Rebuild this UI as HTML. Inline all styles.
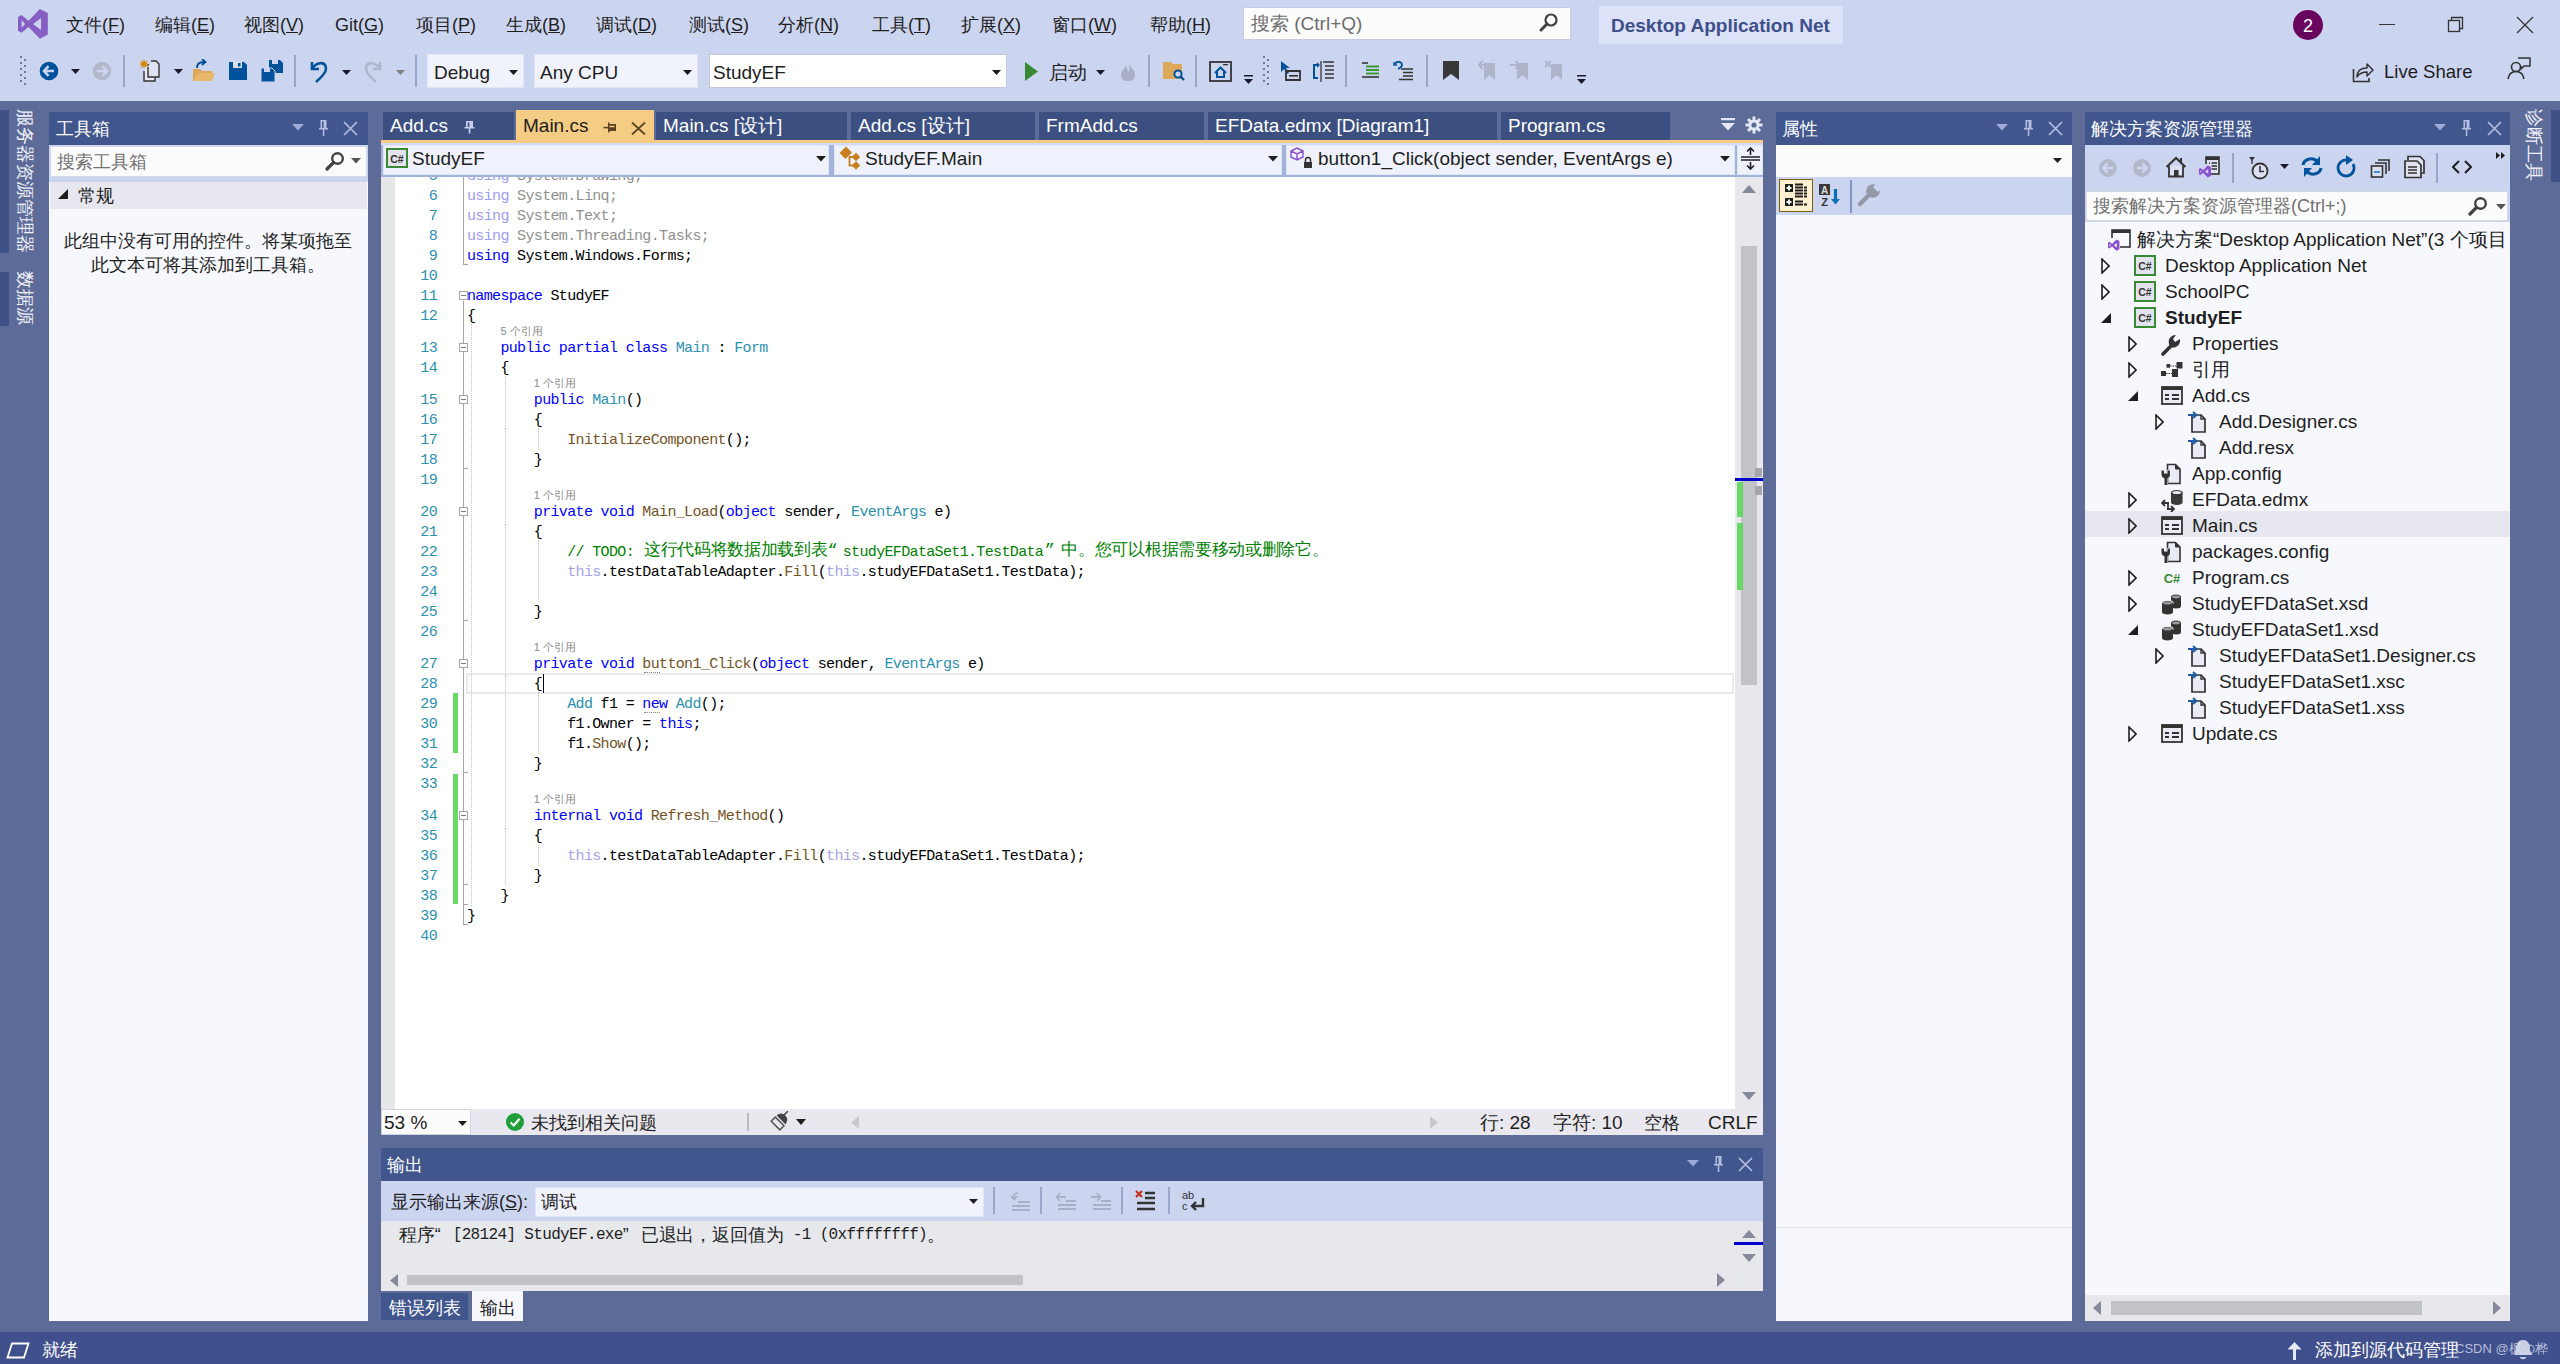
<!DOCTYPE html><html><head><meta charset="utf-8"><style>
html,body{margin:0;padding:0;width:2560px;height:1364px;overflow:hidden;background:#5D6B99;}
body{position:relative;font-family:"Liberation Sans", sans-serif;}
.t{position:absolute;white-space:pre;}
.m{font-family:"Liberation Mono", monospace;}
</style></head><body>
<div style="position:absolute;left:0px;top:0px;width:2560px;height:101px;background:#CCD5F0;"></div>
<svg style="position:absolute;left:12px;top:4px;" width="44" height="40" viewBox="0 0 44 40"><path d="M27.9 5 L35.8 9 L35.8 30.5 L27.9 34.7 L16.5 23 L9.5 28.7 L6 26.8 L6 13 L9.5 11 L16.5 16.8 Z M29 14 L21 20 L29 26 Z M9.7 16 L9.7 24 L13 20 Z" fill="#865FC5" fill-rule="evenodd"/></svg>
<div class="t" style="left:66px;top:11.5px;height:26px;line-height:26px;font-size:18px;color:#1e1e1e;">文件(<u>F</u>)</div>
<div class="t" style="left:155px;top:11.5px;height:26px;line-height:26px;font-size:18px;color:#1e1e1e;">编辑(<u>E</u>)</div>
<div class="t" style="left:244px;top:11.5px;height:26px;line-height:26px;font-size:18px;color:#1e1e1e;">视图(<u>V</u>)</div>
<div class="t" style="left:335px;top:11.5px;height:26px;line-height:26px;font-size:18px;color:#1e1e1e;">Git(<u>G</u>)</div>
<div class="t" style="left:416px;top:11.5px;height:26px;line-height:26px;font-size:18px;color:#1e1e1e;">项目(<u>P</u>)</div>
<div class="t" style="left:506px;top:11.5px;height:26px;line-height:26px;font-size:18px;color:#1e1e1e;">生成(<u>B</u>)</div>
<div class="t" style="left:596px;top:11.5px;height:26px;line-height:26px;font-size:18px;color:#1e1e1e;">调试(<u>D</u>)</div>
<div class="t" style="left:689px;top:11.5px;height:26px;line-height:26px;font-size:18px;color:#1e1e1e;">测试(<u>S</u>)</div>
<div class="t" style="left:778px;top:11.5px;height:26px;line-height:26px;font-size:18px;color:#1e1e1e;">分析(<u>N</u>)</div>
<div class="t" style="left:872px;top:11.5px;height:26px;line-height:26px;font-size:18px;color:#1e1e1e;">工具(<u>T</u>)</div>
<div class="t" style="left:961px;top:11.5px;height:26px;line-height:26px;font-size:18px;color:#1e1e1e;">扩展(<u>X</u>)</div>
<div class="t" style="left:1052px;top:11.5px;height:26px;line-height:26px;font-size:18px;color:#1e1e1e;">窗口(<u>W</u>)</div>
<div class="t" style="left:1150px;top:11.5px;height:26px;line-height:26px;font-size:18px;color:#1e1e1e;">帮助(<u>H</u>)</div>
<div style="position:absolute;left:1243px;top:7px;width:328px;height:33px;background:#FCFCFC;box-sizing:border-box;border:1px solid #C5CBE0;"></div>
<div class="t" style="left:1251px;top:9.5px;height:27px;line-height:27px;font-size:19px;color:#6d6d6d;">搜索 (Ctrl+Q)</div>
<svg style="position:absolute;left:1538px;top:12px;" width="22" height="22" viewBox="0 0 22 22"><circle cx="13" cy="8" r="5.5" fill="none" stroke="#424242" stroke-width="2.2"/><path d="M9 12 L3 18" stroke="#424242" stroke-width="3" stroke-linecap="round"/></svg>
<div style="position:absolute;left:1599px;top:6px;width:244px;height:38px;background:#DCE2F7;"></div>
<div class="t" style="left:1611px;top:11.5px;height:27px;line-height:27px;font-size:19px;color:#3E4F8A;font-weight:bold;">Desktop Application Net</div>
<svg style="position:absolute;left:2293px;top:10px;" width="30" height="30" viewBox="0 0 30 30"><circle cx="15" cy="15" r="15" fill="#68065E"/><text x="15" y="21.5" text-anchor="middle" font-family="Liberation Sans" font-size="18" fill="#fff">2</text></svg>
<div style="position:absolute;left:2379px;top:24px;width:16px;height:1.2px;background:#333;"></div>
<svg style="position:absolute;left:2446px;top:15px;" width="20" height="20" viewBox="0 0 20 20"><rect x="2.5" y="5.5" width="11" height="11" fill="none" stroke="#333" stroke-width="1.3"/><path d="M5.5 5.5 V2.5 H16.5 V13.5 H13.5" fill="none" stroke="#333" stroke-width="1.3"/></svg>
<svg style="position:absolute;left:2515px;top:15px;" width="20" height="20" viewBox="0 0 20 20"><path d="M2 2 L18 18 M18 2 L2 18" stroke="#333" stroke-width="1.2"/></svg>
<svg style="position:absolute;left:19px;top:56px;" width="8" height="30" viewBox="0 0 8 30"><rect x="1" y="0" width="2" height="2" fill="#6F7A9E"/><rect x="5" y="3" width="2" height="2" fill="#6F7A9E"/><rect x="1" y="6" width="2" height="2" fill="#6F7A9E"/><rect x="5" y="9" width="2" height="2" fill="#6F7A9E"/><rect x="1" y="12" width="2" height="2" fill="#6F7A9E"/><rect x="5" y="15" width="2" height="2" fill="#6F7A9E"/><rect x="1" y="18" width="2" height="2" fill="#6F7A9E"/><rect x="5" y="21" width="2" height="2" fill="#6F7A9E"/><rect x="1" y="24" width="2" height="2" fill="#6F7A9E"/><rect x="5" y="27" width="2" height="2" fill="#6F7A9E"/></svg>
<svg style="position:absolute;left:39px;top:61px;" width="20" height="20" viewBox="0 0 20 20"><circle cx="10" cy="10" r="9.3" fill="#00529B"/><path d="M5 10 H15 M9.5 5.2 L5 10 L9.5 14.8" stroke="#CCD5F0" stroke-width="2.6" fill="none"/></svg>
<svg style="position:absolute;left:71px;top:69px;" width="9" height="5" viewBox="0 0 9 5"><path d="M0 0 H9 L4.5 5 Z" fill="#1a1a2e"/></svg>
<svg style="position:absolute;left:92px;top:61px;" width="20" height="20" viewBox="0 0 20 20"><circle cx="10" cy="10" r="9.3" fill="#B3B8CB"/><path d="M5 10 H15 M10.5 5.2 L15 10 L10.5 14.8" stroke="#CCD5F0" stroke-width="2.6" fill="none"/></svg>
<div style="position:absolute;left:123px;top:55px;width:2px;height:32px;background:#9AA6CE;"></div>
<svg style="position:absolute;left:139px;top:59px;" width="22" height="24" viewBox="0 0 22 24"><path d="M5 12 V22 H16 V9 L13 6 H8" fill="#E8E8F4" stroke="#333" stroke-width="1.4"/><path d="M9 8 V18 H20 V5 L17 2 H12" fill="#E0E1F0" stroke="#333" stroke-width="1.4"/><path d="M5 1 V9 M1 5 H9 M2 2 L8 8 M8 2 L2 8" stroke="#D48A00" stroke-width="1.3"/></svg>
<svg style="position:absolute;left:174px;top:69px;" width="9" height="5" viewBox="0 0 9 5"><path d="M0 0 H9 L4.5 5 Z" fill="#1a1a2e"/></svg>
<svg style="position:absolute;left:192px;top:59px;" width="24" height="24" viewBox="0 0 24 24"><path d="M1 10 H8 L10 12 H20 V22 H1 Z" fill="#DCA85A"/><path d="M2 22 L5 14 H23 L20 22 Z" fill="#E8B86A"/><path d="M5 9 C5 4 8 3 13 3 M10 0 L13.5 3 L10 6" stroke="#00529B" stroke-width="1.8" fill="none"/></svg>
<svg style="position:absolute;left:228px;top:61px;" width="20" height="20" viewBox="0 0 20 20"><path d="M1 1 H16 L19 4 V19 H1 Z" fill="#00529B"/><rect x="5" y="1" width="9" height="6" fill="#D9DDF0"/><rect x="10" y="2" width="2.5" height="3.5" fill="#00529B"/></svg>
<svg style="position:absolute;left:260px;top:59px;" width="24" height="24" viewBox="0 0 24 24"><path d="M9 1 H20 L23 4 V14 H9 Z" fill="#00529B"/><rect x="12" y="1" width="6" height="4" fill="#CCD5F0"/><path d="M1 9 H12 L15 12 V23 H1 Z" fill="#00529B" stroke="#CCD5F0" stroke-width="1"/><rect x="4" y="9" width="6" height="4" fill="#CCD5F0"/></svg>
<div style="position:absolute;left:294px;top:55px;width:2px;height:32px;background:#9AA6CE;"></div>
<svg style="position:absolute;left:309px;top:59px;" width="20" height="24" viewBox="0 0 20 24"><path d="M3 3 V10 H10" stroke="#00529B" stroke-width="2.6" fill="none"/><path d="M3.5 9.5 C7 3 16 2 17 9 C17.5 13 14 17 7 23" stroke="#00529B" stroke-width="2.6" fill="none"/></svg>
<svg style="position:absolute;left:342px;top:70px;" width="9" height="5" viewBox="0 0 9 5"><path d="M0 0 H9 L4.5 5 Z" fill="#1a1a2e"/></svg>
<svg style="position:absolute;left:363px;top:59px;" width="20" height="24" viewBox="0 0 20 24"><path d="M17 3 V10 H10" stroke="#B0B6CB" stroke-width="2.6" fill="none"/><path d="M16.5 9.5 C13 3 4 2 3 9 C2.5 13 6 17 13 23" stroke="#B0B6CB" stroke-width="2.6" fill="none"/></svg>
<svg style="position:absolute;left:396px;top:70px;" width="9" height="5" viewBox="0 0 9 5"><path d="M0 0 H9 L4.5 5 Z" fill="#7F7F85"/></svg>
<div style="position:absolute;left:415px;top:55px;width:2px;height:32px;background:#9AA6CE;"></div>
<div style="position:absolute;left:427px;top:54px;width:97px;height:34px;background:#F0F3FC;box-sizing:border-box;border:1px solid #E1E6F6;"></div>
<div class="t" style="left:434px;top:58.5px;height:27px;line-height:27px;font-size:19px;color:#1e1e1e;">Debug</div>
<svg style="position:absolute;left:509px;top:70px;" width="9" height="5" viewBox="0 0 9 5"><path d="M0 0 H9 L4.5 5 Z" fill="#1a1a1a"/></svg>
<div style="position:absolute;left:534px;top:54px;width:164px;height:34px;background:#F0F3FC;box-sizing:border-box;border:1px solid #E1E6F6;"></div>
<div class="t" style="left:540px;top:58.5px;height:27px;line-height:27px;font-size:19px;color:#1e1e1e;">Any CPU</div>
<svg style="position:absolute;left:683px;top:70px;" width="9" height="5" viewBox="0 0 9 5"><path d="M0 0 H9 L4.5 5 Z" fill="#1a1a1a"/></svg>
<div style="position:absolute;left:709px;top:54px;width:298px;height:34px;background:#FFFFFF;box-sizing:border-box;border:1px solid #C3C9DD;"></div>
<div class="t" style="left:713px;top:58.5px;height:27px;line-height:27px;font-size:19px;color:#1e1e1e;">StudyEF</div>
<svg style="position:absolute;left:992px;top:70px;" width="9" height="5" viewBox="0 0 9 5"><path d="M0 0 H9 L4.5 5 Z" fill="#1a1a1a"/></svg>
<svg style="position:absolute;left:1025px;top:62px;" width="14" height="19" viewBox="0 0 14 19"><path d="M0 0 L13 9.5 L0 19 Z" fill="#388A34"/></svg>
<div class="t" style="left:1049px;top:58.5px;height:27px;line-height:27px;font-size:19px;color:#1e1e1e;">启动</div>
<svg style="position:absolute;left:1096px;top:70px;" width="9" height="5" viewBox="0 0 9 5"><path d="M0 0 H9 L4.5 5 Z" fill="#1a1a2e"/></svg>
<svg style="position:absolute;left:1119px;top:62px;" width="18" height="19" viewBox="0 0 18 19"><path d="M9 1 C12 6 16 8 16 13 C16 17 13 19 9 19 C5 19 2 17 2 13 C2 9 6 7 7 3 C8 6 8 8 10 10 C11 7 10 4 9 1 Z" fill="#A9AFC6"/></svg>
<div style="position:absolute;left:1148px;top:55px;width:2px;height:32px;background:#9AA6CE;"></div>
<svg style="position:absolute;left:1162px;top:61px;" width="24" height="21" viewBox="0 0 24 21"><path d="M1 1 H9 L11 3 H20 V18 H1 Z" fill="#DCA85A"/><circle cx="16" cy="13" r="3.6" fill="#CCD5F0" stroke="#00529B" stroke-width="2"/><path d="M18.5 15.5 L22 19" stroke="#00529B" stroke-width="2.4"/></svg>
<div style="position:absolute;left:1195px;top:55px;width:2px;height:32px;background:#9AA6CE;"></div>
<svg style="position:absolute;left:1209px;top:61px;" width="24" height="21" viewBox="0 0 24 21"><rect x="1" y="1" width="21" height="19" fill="none" stroke="#333" stroke-width="1.8"/><path d="M6 12 L11.5 6.5 L17 12 M8 11 V16 H15 V11" stroke="#00529B" stroke-width="2" fill="none"/><rect x="14" y="3" width="5" height="1.3" fill="#333"/></svg>
<svg style="position:absolute;left:1244px;top:75px;" width="9" height="10" viewBox="0 0 9 10"><rect x="0" y="0" width="9" height="1.5" fill="#1a1a2e"/><path d="M0 4 H9 L4.5 9 Z" fill="#1a1a2e"/></svg>
<svg style="position:absolute;left:1262px;top:56px;" width="8" height="30" viewBox="0 0 8 30"><rect x="1" y="0" width="2" height="2" fill="#6F7A9E"/><rect x="5" y="3" width="2" height="2" fill="#6F7A9E"/><rect x="1" y="6" width="2" height="2" fill="#6F7A9E"/><rect x="5" y="9" width="2" height="2" fill="#6F7A9E"/><rect x="1" y="12" width="2" height="2" fill="#6F7A9E"/><rect x="5" y="15" width="2" height="2" fill="#6F7A9E"/><rect x="1" y="18" width="2" height="2" fill="#6F7A9E"/><rect x="5" y="21" width="2" height="2" fill="#6F7A9E"/><rect x="1" y="24" width="2" height="2" fill="#6F7A9E"/><rect x="5" y="27" width="2" height="2" fill="#6F7A9E"/></svg>
<svg style="position:absolute;left:1280px;top:60px;" width="22" height="22" viewBox="0 0 22 22"><path d="M1 1 L1 12 L4 9 L7 14 L9 13 L6 8 H10 Z" fill="#00529B"/><path d="M6 11 H20 V20 H6 Z" fill="none" stroke="#333" stroke-width="1.8"/><rect x="9" y="15" width="9" height="1.6" fill="#333"/></svg>
<svg style="position:absolute;left:1312px;top:59px;" width="24" height="24" viewBox="0 0 24 24"><path d="M6 6 H2 V19 H6" stroke="#00529B" stroke-width="2" fill="none"/><path d="M9 2 V23" stroke="#555" stroke-width="1.6"/><path d="M11 3 H22 M13 7 H22 M13 11 H22 M13 15 H22 M13 19 H22" stroke="#333" stroke-width="1.6"/><path d="M5 4 L7 6 L5 8" stroke="#00529B" stroke-width="1.4" fill="none"/></svg>
<div style="position:absolute;left:1345px;top:55px;width:2px;height:32px;background:#9AA6CE;"></div>
<svg style="position:absolute;left:1362px;top:62px;" width="18" height="16" viewBox="0 0 18 16"><path d="M0 1 H6" stroke="#333" stroke-width="1.6"/><path d="M4 4.5 H17 M4 8 H17 M4 11.5 H17" stroke="#3A9A3A" stroke-width="1.8"/><path d="M0 15 H17" stroke="#333" stroke-width="1.6"/></svg>
<svg style="position:absolute;left:1393px;top:61px;" width="21" height="20" viewBox="0 0 21 20"><path d="M2 3 C3 0 9 0 9 4 C9 6 7 7 5 8" stroke="#00529B" stroke-width="1.8" fill="none"/><path d="M1 1 V4 H4" stroke="#00529B" stroke-width="1.4" fill="none"/><path d="M8 8 H20 M10 11.5 H20 M10 15 H20 M6 18.5 H20" stroke="#333" stroke-width="1.7"/></svg>
<div style="position:absolute;left:1426px;top:55px;width:2px;height:32px;background:#9AA6CE;"></div>
<svg style="position:absolute;left:1442px;top:61px;" width="18" height="20" viewBox="0 0 18 20"><path d="M1 0 H17 V19 L9 13 L1 19 Z" fill="#383838"/></svg>
<svg style="position:absolute;left:1478px;top:60px;" width="19" height="21" viewBox="0 0 19 21"><path d="M6 3 H17 V20 L11.5 15 L6 20 Z" fill="#AEB4C9"/><path d="M1 5 H9 M4.5 1 L1 5 L4.5 9" stroke="#AEB4C9" stroke-width="2" fill="none"/></svg>
<svg style="position:absolute;left:1510px;top:60px;" width="20" height="21" viewBox="0 0 20 21"><path d="M7 3 H18 V20 L12.5 15 L7 20 Z" fill="#AEB4C9"/><path d="M0 5 H9 M5.5 1 L9 5 L5.5 9" stroke="#AEB4C9" stroke-width="2" fill="none"/></svg>
<svg style="position:absolute;left:1544px;top:60px;" width="20" height="21" viewBox="0 0 20 21"><path d="M7 4 H18 V20 L12.5 15 L7 20 Z" fill="#AEB4C9"/><path d="M1 1 L7 7 M7 1 L1 7" stroke="#AEB4C9" stroke-width="1.8"/></svg>
<svg style="position:absolute;left:1577px;top:75px;" width="9" height="10" viewBox="0 0 9 10"><rect x="0" y="0" width="9" height="1.5" fill="#1a1a2e"/><path d="M0 4 H9 L4.5 9 Z" fill="#1a1a2e"/></svg>
<svg style="position:absolute;left:2352px;top:61px;" width="22" height="22" viewBox="0 0 22 22"><path d="M1.5 8 V20.5 H17 V17" stroke="#333" stroke-width="1.6" fill="none"/><path d="M5 16 C5 10 9 7 15 7 V3 L21 9 L15 15 V11 C10 11 7 13 5 16 Z" stroke="#333" stroke-width="1.5" fill="none" stroke-linejoin="round"/></svg>
<div class="t" style="left:2384px;top:58.8px;height:26.5px;line-height:26.5px;font-size:18.5px;color:#1e1e1e;">Live Share</div>
<svg style="position:absolute;left:2507px;top:57px;" width="24" height="24" viewBox="0 0 24 24"><circle cx="9" cy="10" r="4.5" fill="none" stroke="#333" stroke-width="1.6"/><path d="M1 22 C2 16 5 14.5 9 14.5 C13 14.5 16 16 17 22" stroke="#333" stroke-width="1.6" fill="none"/><path d="M11 1 H23 V9 H17 L14 12 V9" stroke="#333" stroke-width="1.5" fill="none"/></svg>
<div style="position:absolute;left:0px;top:110px;width:9px;height:143px;background:#3F5288;"></div>
<div style="position:absolute;left:0px;top:272px;width:9px;height:54px;background:#3F5288;"></div>
<div class="t" style="left:37px;top:109px;width:150px;height:24px;line-height:24px;font-size:18px;color:#F0F2FA;transform-origin:0 0;transform:rotate(90deg);">服务器资源管理器</div>
<div class="t" style="left:37px;top:271px;width:60px;height:24px;line-height:24px;font-size:18px;color:#F0F2FA;transform-origin:0 0;transform:rotate(90deg);">数据源</div>
<div style="position:absolute;left:2551px;top:110px;width:9px;height:72px;background:#3F5288;"></div>
<div class="t" style="left:2546px;top:109px;width:80px;height:24px;line-height:24px;font-size:18px;color:#F0F2FA;transform-origin:0 0;transform:rotate(90deg);">诊断工具</div>
<div style="position:absolute;left:49px;top:112px;width:319px;height:33px;background:#40568D;"></div>
<div class="t" style="left:56px;top:115.5px;height:26px;line-height:26px;font-size:18px;color:#FFFFFF;">工具箱</div>
<svg style="position:absolute;left:292px;top:124px;" width="12" height="7" viewBox="0 0 12 7"><path d="M0 0 H12 L6 6.5 Z" fill="#9EA9D6"/></svg>
<svg style="position:absolute;left:318px;top:119px;" width="11" height="18" viewBox="0 0 11 18"><path d="M2.5 1 H8.5 V9 H10 V10.5 H1 V9 H2.5 Z M4 2.5 V9 H5.5 V2.5 Z" fill="#B3BEE2" fill-rule="evenodd"/><rect x="4.8" y="10" width="1.5" height="7" fill="#B3BEE2"/></svg>
<svg style="position:absolute;left:343px;top:121px;" width="15" height="15" viewBox="0 0 15 15"><path d="M1 1 L14 14 M14 1 L1 14" stroke="#B3BEE2" stroke-width="1.7"/></svg>
<div style="position:absolute;left:49px;top:145px;width:319px;height:37px;background:#CCD5F0;"></div>
<div style="position:absolute;left:50px;top:146px;width:317px;height:31px;background:#FCFCFC;box-sizing:border-box;border:1px solid #D5D9E6;"></div>
<div class="t" style="left:57px;top:148.5px;height:26px;line-height:26px;font-size:18px;color:#717171;">搜索工具箱</div>
<svg style="position:absolute;left:325px;top:151px;" width="20" height="20" viewBox="0 0 20 20"><circle cx="12.5" cy="7.5" r="5.3" fill="none" stroke="#424242" stroke-width="2.4"/><path d="M8.5 11.5 L2 18" stroke="#424242" stroke-width="3.2" stroke-linecap="round"/></svg>
<svg style="position:absolute;left:351px;top:158px;" width="10" height="6" viewBox="0 0 10 6"><path d="M0 0 H10 L5 5.5 Z" fill="#555"/></svg>
<div style="position:absolute;left:49px;top:182px;width:319px;height:1139px;background:#F7F8FD;"></div>
<div style="position:absolute;left:50px;top:182px;width:317px;height:27px;background:#E6E7EF;"></div>
<svg style="position:absolute;left:58px;top:189px;" width="11" height="11" viewBox="0 0 11 11"><path d="M10 0 V10 H0 Z" fill="#1e1e1e"/></svg>
<div class="t" style="left:78px;top:182.5px;height:26px;line-height:26px;font-size:18px;color:#1e1e1e;">常规</div>
<div class="t" style="left:64px;top:228.0px;height:26px;line-height:26px;font-size:18px;color:#1e1e1e;">此组中没有可用的控件。将某项拖至</div>
<div class="t" style="left:91px;top:252.0px;height:26px;line-height:26px;font-size:18px;color:#1e1e1e;">此文本可将其添加到工具箱。</div>
<div style="position:absolute;left:1776px;top:112px;width:296px;height:33px;background:#40568D;"></div>
<div class="t" style="left:1782px;top:115.5px;height:26px;line-height:26px;font-size:18px;color:#FFFFFF;">属性</div>
<svg style="position:absolute;left:1996px;top:124px;" width="12" height="7" viewBox="0 0 12 7"><path d="M0 0 H12 L6 6.5 Z" fill="#9EA9D6"/></svg>
<svg style="position:absolute;left:2023px;top:119px;" width="11" height="18" viewBox="0 0 11 18"><path d="M2.5 1 H8.5 V9 H10 V10.5 H1 V9 H2.5 Z M4 2.5 V9 H5.5 V2.5 Z" fill="#B3BEE2" fill-rule="evenodd"/><rect x="4.8" y="10" width="1.5" height="7" fill="#B3BEE2"/></svg>
<svg style="position:absolute;left:2048px;top:121px;" width="15" height="15" viewBox="0 0 15 15"><path d="M1 1 L14 14 M14 1 L1 14" stroke="#B3BEE2" stroke-width="1.7"/></svg>
<div style="position:absolute;left:1776px;top:145px;width:296px;height:32px;background:#FCFCFD;"></div>
<svg style="position:absolute;left:2053px;top:158px;" width="9" height="5" viewBox="0 0 9 5"><path d="M0 0 H9 L4.5 5 Z" fill="#1e1e1e"/></svg>
<div style="position:absolute;left:1776px;top:177px;width:296px;height:38px;background:#CCD5F0;"></div>
<div style="position:absolute;left:1779px;top:179px;width:34px;height:33px;background:#FFF0D2;box-sizing:border-box;border:1.5px solid #80600A;"></div>
<svg style="position:absolute;left:1784px;top:183px;" width="25" height="25" viewBox="0 0 25 25"><rect x="1" y="1" width="8" height="8" fill="#1e1e1e"/><path d="M2.5 5 H7.5 M5 2.5 V7.5" stroke="#F0F0F0" stroke-width="2"/><rect x="1" y="15" width="8" height="8" fill="#1e1e1e"/><path d="M2.5 19 H7.5 M5 16.5 V21.5" stroke="#F0F0F0" stroke-width="2"/><path d="M11 1.5 H19 M11 4.5 H19 M11 7.5 H19 M11 10.5 H19 M11 13.5 H19 M11 18.5 H19 M11 21.5 H19 M20 4.5 H23 M20 7.5 H23 M20 10.5 H23 M20 13.5 H23 M20 21.5 H23" stroke="#1e1e1e" stroke-width="1.8"/></svg>
<svg style="position:absolute;left:1818px;top:183px;" width="24" height="25" viewBox="0 0 24 25"><rect x="1" y="1" width="11" height="11" fill="#3a3a3a"/><text x="6.5" y="10.5" font-size="10" font-family="Liberation Sans" font-weight="bold" fill="#ddd" text-anchor="middle">A</text><text x="6.5" y="23" font-size="11" font-family="Liberation Sans" font-weight="bold" fill="#333" text-anchor="middle">Z</text><path d="M17.5 6 V18" stroke="#0E6FB8" stroke-width="3.2"/><path d="M13 16 H22 L17.5 21.5 Z" fill="#0E6FB8"/></svg>
<div style="position:absolute;left:1850px;top:180px;width:1.5px;height:33px;background:#8393C4;"></div>
<svg style="position:absolute;left:1857px;top:182px;" width="26" height="26" viewBox="0 0 26 26"><path d="M3 22 L13 12" stroke="#9499A6" stroke-width="4.5" stroke-linecap="round"/><circle cx="16" cy="9" r="6.8" fill="#9499A6"/><path d="M16 5 L20 1 L25 6 L21 10 Z" fill="#CCD5F0"/></svg>
<div style="position:absolute;left:1776px;top:215px;width:296px;height:1106px;background:#F7F8FD;"></div>
<div style="position:absolute;left:1776px;top:1227px;width:296px;height:1px;background:#E3E5EE;"></div>
<div style="position:absolute;left:2085px;top:112px;width:425px;height:33px;background:#40568D;"></div>
<div class="t" style="left:2091px;top:115.5px;height:26px;line-height:26px;font-size:18px;color:#FFFFFF;">解决方案资源管理器</div>
<svg style="position:absolute;left:2434px;top:124px;" width="12" height="7" viewBox="0 0 12 7"><path d="M0 0 H12 L6 6.5 Z" fill="#9EA9D6"/></svg>
<svg style="position:absolute;left:2461px;top:119px;" width="11" height="18" viewBox="0 0 11 18"><path d="M2.5 1 H8.5 V9 H10 V10.5 H1 V9 H2.5 Z M4 2.5 V9 H5.5 V2.5 Z" fill="#B3BEE2" fill-rule="evenodd"/><rect x="4.8" y="10" width="1.5" height="7" fill="#B3BEE2"/></svg>
<svg style="position:absolute;left:2487px;top:121px;" width="15" height="15" viewBox="0 0 15 15"><path d="M1 1 L14 14 M14 1 L1 14" stroke="#B3BEE2" stroke-width="1.7"/></svg>
<div style="position:absolute;left:2085px;top:145px;width:425px;height:45px;background:#CCD5F0;"></div>
<div style="position:absolute;left:2085px;top:190px;width:425px;height:32px;background:#CCD5F0;"></div>
<div style="position:absolute;left:2086px;top:191px;width:422px;height:30px;background:#FCFCFC;box-sizing:border-box;border:1px solid #D5D9E6;"></div>
<div class="t" style="left:2093px;top:192.5px;height:26px;line-height:26px;font-size:18px;color:#717171;">搜索解决方案资源管理器(Ctrl+;)</div>
<svg style="position:absolute;left:2468px;top:196px;" width="20" height="20" viewBox="0 0 20 20"><circle cx="12.5" cy="7.5" r="5.3" fill="none" stroke="#424242" stroke-width="2.4"/><path d="M8.5 11.5 L2 18" stroke="#424242" stroke-width="3.2" stroke-linecap="round"/></svg>
<svg style="position:absolute;left:2496px;top:204px;" width="10" height="6" viewBox="0 0 10 6"><path d="M0 0 H10 L5 5.5 Z" fill="#555"/></svg>
<div style="position:absolute;left:2085px;top:222px;width:425px;height:1099px;background:#F7F8FD;"></div>
<svg style="position:absolute;left:2098px;top:158px;" width="20" height="20" viewBox="0 0 20 20"><circle cx="10" cy="10" r="9" fill="#B3B8CB"/><path d="M5 10 H15 M9.5 5.5 L5 10 L9.5 14.5" stroke="#CCD5F0" stroke-width="2.4" fill="none"/></svg>
<svg style="position:absolute;left:2132px;top:158px;" width="20" height="20" viewBox="0 0 20 20"><circle cx="10" cy="10" r="9" fill="#B3B8CB"/><path d="M5 10 H15 M10.5 5.5 L15 10 L10.5 14.5" stroke="#CCD5F0" stroke-width="2.4" fill="none"/></svg>
<svg style="position:absolute;left:2165px;top:156px;" width="22" height="22" viewBox="0 0 22 22"><path d="M1.5 11 L11 2 L20.5 11" stroke="#333" stroke-width="2" fill="none"/><path d="M4 10 V20.5 H18 V10" fill="#DDE0F0" stroke="#333" stroke-width="1.8"/><rect x="9" y="14" width="4.5" height="6.5" fill="#333"/><rect x="15" y="2" width="2" height="5" fill="#333"/></svg>
<svg style="position:absolute;left:2198px;top:156px;" width="22" height="22" viewBox="0 0 22 22"><rect x="8" y="1" width="13" height="17" fill="#DDE0F0" stroke="#333" stroke-width="1.6"/><rect x="8" y="1" width="13" height="3" fill="#333"/><path d="M11 7 H12 M13.5 7 H19 M13.5 10 H19 M13.5 13 H19" stroke="#333" stroke-width="1.4"/><rect x="0" y="8" width="11" height="14" fill="#CCD5F0"/><path transform="translate(-1.40 7.50) scale(0.400)" d="M27.9 5 L35.8 9 L35.8 30.5 L27.9 34.7 L16.5 23 L9.5 28.7 L6 26.8 L6 13 L9.5 11 L16.5 16.8 Z M29 14 L21 20 L29 26 Z M9.7 16 L9.7 24 L13 20 Z" fill="#8A4FCF" fill-rule="evenodd"/></svg>
<div style="position:absolute;left:2232px;top:153px;width:2px;height:30px;background:#9AA6CE;"></div>
<svg style="position:absolute;left:2247px;top:156px;" width="24" height="24" viewBox="0 0 24 24"><path d="M2 1 H8 L5 5 Z" fill="#333"/><path d="M5 4 V8" stroke="#333" stroke-width="1.3"/><circle cx="13" cy="15" r="7.5" fill="#DDE0F0" stroke="#333" stroke-width="1.8"/><path d="M13 10 V15.5 H17" stroke="#333" stroke-width="1.6" fill="none"/></svg>
<svg style="position:absolute;left:2280px;top:164px;" width="9" height="5" viewBox="0 0 9 5"><path d="M0 0 H9 L4.5 5 Z" fill="#1a1a2e"/></svg>
<svg style="position:absolute;left:2300px;top:155px;" width="24" height="24" viewBox="0 0 24 24"><path d="M3 10 C4 4 12 2 17 6 L19 8" stroke="#00539C" stroke-width="3" fill="none"/><path d="M20 1 V10 H12 Z" fill="#00539C"/><path d="M21 13 C20 19 12 21 7 17 L5 15" stroke="#00539C" stroke-width="3" fill="none"/><path d="M4 22 V13 H12 Z" fill="#00539C"/></svg>
<svg style="position:absolute;left:2336px;top:155px;" width="22" height="24" viewBox="0 0 22 24"><path d="M17 9 A8 8 0 1 1 11 5" stroke="#00539C" stroke-width="2.8" fill="none"/><path d="M10 0 L17 5 L10 10 Z" fill="#00539C"/></svg>
<svg style="position:absolute;left:2370px;top:157px;" width="22" height="22" viewBox="0 0 22 22"><rect x="1.5" y="9" width="11" height="11" fill="#DDE0F0" stroke="#333" stroke-width="1.6"/><path d="M5 6 H16 V17 M8 3 H19 V14" stroke="#333" stroke-width="1.6" fill="none"/><path d="M4 15 H10" stroke="#1C7CD5" stroke-width="1.6"/></svg>
<svg style="position:absolute;left:2403px;top:155px;" width="24" height="24" viewBox="0 0 24 24"><path d="M5 5 V1.5 H17 L21 5.5 V18 H18" stroke="#333" stroke-width="1.7" fill="#E0E2EF"/><path d="M2 6 H14 L18 10 V22.5 H2 Z" fill="#E0E2EF" stroke="#333" stroke-width="1.7"/><path d="M5 12 H14 M5 15 H14 M5 18 H14" stroke="#333" stroke-width="1.4"/></svg>
<div style="position:absolute;left:2436px;top:153px;width:2px;height:30px;background:#9AA6CE;"></div>
<svg style="position:absolute;left:2452px;top:160px;" width="20" height="14" viewBox="0 0 20 14"><path d="M7 1 L1 7 L7 13 M13 1 L19 7 L13 13" stroke="#1e1e1e" stroke-width="2" fill="none"/></svg>
<svg style="position:absolute;left:2496px;top:152px;" width="10" height="8" viewBox="0 0 10 8"><path d="M0 0 L4 3.5 L0 7 Z M5 0 L9 3.5 L5 7 Z" fill="#1e1e1e"/></svg>
<div style="position:absolute;left:2085px;top:1295px;width:425px;height:26px;background:#E8E8EC;"></div>
<svg style="position:absolute;left:2093px;top:1301px;" width="8" height="14" viewBox="0 0 8 14"><path d="M8 0 V14 L0 7 Z" fill="#868999"/></svg>
<div style="position:absolute;left:2111px;top:1301px;width:311px;height:14px;background:#C2C3C9;"></div>
<svg style="position:absolute;left:2493px;top:1301px;" width="8" height="14" viewBox="0 0 8 14"><path d="M0 0 V14 L8 7 Z" fill="#868999"/></svg>
<div style="position:absolute;left:0px;top:1332px;width:2560px;height:32px;background:#40508D;"></div>
<svg style="position:absolute;left:6px;top:1342px;" width="24" height="17" viewBox="0 0 24 17"><path d="M6 1.5 H22.5 L18 15.5 H1.5 Z" fill="none" stroke="#fff" stroke-width="1.8"/></svg>
<div class="t" style="left:42px;top:1337.0px;height:26px;line-height:26px;font-size:18px;color:#FFFFFF;">就绪</div>
<svg style="position:absolute;left:2287px;top:1341px;" width="15" height="20" viewBox="0 0 15 20"><path d="M7.5 7 V19" stroke="#E8EAF4" stroke-width="3"/><path d="M0.5 8.5 L7.5 1 L14.5 8.5 Z" fill="#E8EAF4"/></svg>
<svg style="position:absolute;left:2512px;top:1338px;" width="22" height="24" viewBox="0 0 22 24"><path d="M11 2 C5 2 4 8 4 12 L2 17 H20 L18 12 C18 8 17 2 11 2 Z M8 19 C8 22 14 22 14 19 Z" fill="#D8DCEC" opacity="0.9"/></svg>
<div class="t" style="left:2315px;top:1337.0px;height:26px;line-height:26px;font-size:18px;color:#FFFFFF;">添加到源代码管理</div>
<div class="t" style="left:2455px;top:1337.5px;height:21px;line-height:21px;font-size:13px;color:rgba(215,220,238,0.8);">CSDN @枫の桦</div>
<div style="position:absolute;left:383px;top:112px;width:131px;height:28px;background:#3C4F81;"></div>
<div class="t" style="left:390px;top:112.0px;height:27px;line-height:27px;font-size:19px;color:#FFFFFF;">Add.cs</div>
<div style="position:absolute;left:516px;top:110px;width:138px;height:30px;background:#F5CC84;"></div>
<div class="t" style="left:523px;top:112.0px;height:27px;line-height:27px;font-size:19px;color:#1e1e1e;">Main.cs</div>
<div style="position:absolute;left:656px;top:112px;width:191px;height:28px;background:#3C4F81;"></div>
<div class="t" style="left:663px;top:112.0px;height:27px;line-height:27px;font-size:19px;color:#FFFFFF;">Main.cs [设计]</div>
<div style="position:absolute;left:851px;top:112px;width:184px;height:28px;background:#3C4F81;"></div>
<div class="t" style="left:858px;top:112.0px;height:27px;line-height:27px;font-size:19px;color:#FFFFFF;">Add.cs [设计]</div>
<div style="position:absolute;left:1039px;top:112px;width:165px;height:28px;background:#3C4F81;"></div>
<div class="t" style="left:1046px;top:112.0px;height:27px;line-height:27px;font-size:19px;color:#FFFFFF;">FrmAdd.cs</div>
<div style="position:absolute;left:1208px;top:112px;width:289px;height:28px;background:#3C4F81;"></div>
<div class="t" style="left:1215px;top:112.0px;height:27px;line-height:27px;font-size:19px;color:#FFFFFF;">EFData.edmx [Diagram1]</div>
<div style="position:absolute;left:1501px;top:112px;width:169px;height:28px;background:#3C4F81;"></div>
<div class="t" style="left:1508px;top:112.0px;height:27px;line-height:27px;font-size:19px;color:#FFFFFF;">Program.cs</div>
<svg style="position:absolute;left:464px;top:120px;" width="11" height="14" viewBox="0 0 11 14"><path d="M2 1 H9 V7 H10.5 V8.5 H0.5 V7 H2 Z M3.7 2.5 V7 H5.3 V2.5 Z" fill="#C5CDEB" fill-rule="evenodd"/><rect x="4.7" y="8" width="1.6" height="5.5" fill="#C5CDEB"/></svg>
<svg style="position:absolute;left:603px;top:122px;" width="14" height="12" viewBox="0 0 14 12"><path d="M13 2 V9 H6.5 V10.5 H5 V0.5 H6.5 V2 Z M11.5 3.7 H6.5 V5.3 H11.5 Z" fill="#5A4320" fill-rule="evenodd"/><rect x="0.5" y="4.8" width="5.5" height="1.6" fill="#5A4320"/></svg>
<svg style="position:absolute;left:631px;top:122px;" width="15" height="13" viewBox="0 0 15 13"><path d="M1 0.5 L14 12.5 M14 0.5 L1 12.5" stroke="#5A4320" stroke-width="1.8"/></svg>
<svg style="position:absolute;left:1721px;top:118px;" width="15" height="14" viewBox="0 0 15 14"><rect x="0" y="0" width="14" height="2.2" fill="#E3E8F8"/><path d="M0 5 H14 L7 12.5 Z" fill="#E3E8F8"/></svg>
<svg style="position:absolute;left:1745px;top:116px;" width="18" height="18" viewBox="0 0 18 18"><g fill="#E3E8F8"><circle cx="9" cy="9" r="5.6"/><rect x="7.5" y="0.5" width="3" height="17"/><rect x="0.5" y="7.5" width="17" height="3"/><rect x="7.5" y="0.5" width="3" height="17" transform="rotate(45 9 9)"/><rect x="7.5" y="0.5" width="3" height="17" transform="rotate(-45 9 9)"/></g><circle cx="9" cy="9" r="2.6" fill="#5D6B99"/></svg>
<div style="position:absolute;left:381px;top:140px;width:1382px;height:3px;background:#F5CC84;"></div>
<div style="position:absolute;left:381px;top:143px;width:1382px;height:34px;background:#A3B2D9;"></div>
<div style="position:absolute;left:381px;top:143px;width:1382px;height:2px;background:#D3DCF5;"></div>
<div style="position:absolute;left:383px;top:145px;width:446px;height:30px;background:#EFF2FC;box-sizing:border-box;border:1px solid #DFE6F8;"></div>
<div style="position:absolute;left:834px;top:145px;width:448px;height:30px;background:#EFF2FC;box-sizing:border-box;border:1px solid #DFE6F8;"></div>
<div style="position:absolute;left:1286px;top:145px;width:449px;height:30px;background:#EFF2FC;box-sizing:border-box;border:1px solid #DFE6F8;"></div>
<div style="position:absolute;left:1737px;top:145px;width:26px;height:30px;background:#EFF2FC;box-sizing:border-box;border:1px solid #DFE6F8;"></div>
<div style="position:absolute;left:381px;top:175px;width:1382px;height:2px;background:#A3B2D9;"></div>
<svg style="position:absolute;left:386px;top:148px;" width="22" height="20" viewBox="0 0 22 20"><rect x="1" y="1" width="20" height="18" fill="#E2E3EE" stroke="#388A34" stroke-width="2"/><text x="11" y="14.5" text-anchor="middle" font-family="Liberation Sans" font-weight="bold" font-size="10.5" fill="#333">C#</text></svg>
<div class="t" style="left:412px;top:145.0px;height:27px;line-height:27px;font-size:19px;color:#1e1e1e;">StudyEF</div>
<svg style="position:absolute;left:816px;top:156px;" width="10" height="6" viewBox="0 0 10 6"><path d="M0 0 H10 L5 5.5 Z" fill="#1e1e1e"/></svg>
<svg style="position:absolute;left:839px;top:146px;" width="23" height="24" viewBox="0 0 23 24"><path d="M0.5 7 L7 0.5 L13 6.5 L6.5 13 Z" fill="#C8801E"/><path d="M10.5 10 V19.5 H15 M10.5 11 H15" stroke="#C8801E" stroke-width="1.8" fill="none"/><path d="M12.8 11 L17 6.8 L21.2 11 L17 15.2 Z M12.8 19.5 L17 15.3 L21.2 19.5 L17 23.7 Z" fill="#C8801E"/></svg>
<div class="t" style="left:865px;top:145.0px;height:27px;line-height:27px;font-size:19px;color:#1e1e1e;">StudyEF.Main</div>
<svg style="position:absolute;left:1268px;top:156px;" width="10" height="6" viewBox="0 0 10 6"><path d="M0 0 H10 L5 5.5 Z" fill="#1e1e1e"/></svg>
<svg style="position:absolute;left:1290px;top:147px;" width="24" height="23" viewBox="0 0 24 23"><path d="M7 1 L13 4 V10 L7 13 L1 10 V4 Z M1 4 L7 7 L13 4 M7 7 V13" stroke="#8A4FCF" stroke-width="1.4" fill="none"/><rect x="14" y="15" width="8" height="6" fill="#333"/><path d="M15.5 15 V13 A2.5 2.5 0 0 1 20.5 13 V15" stroke="#333" stroke-width="1.5" fill="none"/></svg>
<div class="t" style="left:1318px;top:145.0px;height:27px;line-height:27px;font-size:19px;color:#1e1e1e;">button1_Click(object sender, EventArgs e)</div>
<svg style="position:absolute;left:1720px;top:156px;" width="10" height="6" viewBox="0 0 10 6"><path d="M0 0 H10 L5 5.5 Z" fill="#1e1e1e"/></svg>
<svg style="position:absolute;left:1741px;top:147px;" width="19" height="23" viewBox="0 0 19 23"><path d="M0 10 H19 M0 13 H19" stroke="#1e1e1e" stroke-width="1.6"/><path d="M9.5 1 V8 M6 4.5 L9.5 1 L13 4.5 M9.5 22 V15 M6 18.5 L9.5 22 L13 18.5" stroke="#1e1e1e" stroke-width="1.6" fill="none"/></svg>
<div style="position:absolute;left:381px;top:177px;width:1382px;height:932px;background:#FFFFFF;"></div>
<div style="position:absolute;left:381px;top:177px;width:14px;height:932px;background:#E6E7E8;"></div>
<div style="position:absolute;left:466px;top:673px;width:1268px;height:21px;background:transparent;box-sizing:border-box;border:2px solid #E9E9EF;"></div>
<div style="position:absolute;left:381px;top:177px;width:1354px;height:932px;overflow:hidden;">
<div class="t m" style="left:86.00px;top:-11px;height:22px;line-height:22px;font-size:15px;letter-spacing:-0.65px;color:#9C9CF5;">using</div>
<div class="t m" style="left:136.10px;top:-11px;height:22px;line-height:22px;font-size:15px;letter-spacing:-0.65px;color:#8F8F8F;">System.Drawing;</div>
<div class="t m" style="left:86.00px;top:9px;height:22px;line-height:22px;font-size:15px;letter-spacing:-0.65px;color:#9C9CF5;">using</div>
<div class="t m" style="left:136.10px;top:9px;height:22px;line-height:22px;font-size:15px;letter-spacing:-0.65px;color:#8F8F8F;">System.Linq;</div>
<div class="t m" style="left:86.00px;top:29px;height:22px;line-height:22px;font-size:15px;letter-spacing:-0.65px;color:#9C9CF5;">using</div>
<div class="t m" style="left:136.10px;top:29px;height:22px;line-height:22px;font-size:15px;letter-spacing:-0.65px;color:#8F8F8F;">System.Text;</div>
<div class="t m" style="left:86.00px;top:49px;height:22px;line-height:22px;font-size:15px;letter-spacing:-0.65px;color:#9C9CF5;">using</div>
<div class="t m" style="left:136.10px;top:49px;height:22px;line-height:22px;font-size:15px;letter-spacing:-0.65px;color:#8F8F8F;">System.Threading.Tasks;</div>
<div class="t m" style="left:86.00px;top:69px;height:22px;line-height:22px;font-size:15px;letter-spacing:-0.65px;color:#0000FF;">using</div>
<div class="t m" style="left:136.10px;top:69px;height:22px;line-height:22px;font-size:15px;letter-spacing:-0.65px;color:#000000;">System.Windows.Forms;</div>
<div class="t m" style="left:86.00px;top:109px;height:22px;line-height:22px;font-size:15px;letter-spacing:-0.65px;color:#0000FF;">namespace</div>
<div class="t m" style="left:169.50px;top:109px;height:22px;line-height:22px;font-size:15px;letter-spacing:-0.65px;color:#000000;">StudyEF</div>
<div class="t m" style="left:86.00px;top:129px;height:22px;line-height:22px;font-size:15px;letter-spacing:-0.65px;color:#000000;">{</div>
<div class="t m" style="left:119.40px;top:161px;height:22px;line-height:22px;font-size:15px;letter-spacing:-0.65px;color:#0000FF;">public partial class</div>
<div class="t m" style="left:294.75px;top:161px;height:22px;line-height:22px;font-size:15px;letter-spacing:-0.65px;color:#2B91AF;">Main</div>
<div class="t m" style="left:336.50px;top:161px;height:22px;line-height:22px;font-size:15px;letter-spacing:-0.65px;color:#000000;">: </div>
<div class="t m" style="left:353.20px;top:161px;height:22px;line-height:22px;font-size:15px;letter-spacing:-0.65px;color:#2B91AF;">Form</div>
<div class="t m" style="left:119.40px;top:181px;height:22px;line-height:22px;font-size:15px;letter-spacing:-0.65px;color:#000000;">{</div>
<div class="t m" style="left:152.80px;top:213px;height:22px;line-height:22px;font-size:15px;letter-spacing:-0.65px;color:#0000FF;">public</div>
<div class="t m" style="left:211.25px;top:213px;height:22px;line-height:22px;font-size:15px;letter-spacing:-0.65px;color:#2B91AF;">Main</div>
<div class="t m" style="left:244.65px;top:213px;height:22px;line-height:22px;font-size:15px;letter-spacing:-0.65px;color:#000000;">()</div>
<div class="t m" style="left:152.80px;top:233px;height:22px;line-height:22px;font-size:15px;letter-spacing:-0.65px;color:#000000;">{</div>
<div class="t m" style="left:186.20px;top:253px;height:22px;line-height:22px;font-size:15px;letter-spacing:-0.65px;color:#74531F;">InitializeComponent</div>
<div class="t m" style="left:344.85px;top:253px;height:22px;line-height:22px;font-size:15px;letter-spacing:-0.65px;color:#000000;">();</div>
<div class="t m" style="left:152.80px;top:273px;height:22px;line-height:22px;font-size:15px;letter-spacing:-0.65px;color:#000000;">}</div>
<div class="t m" style="left:152.80px;top:325px;height:22px;line-height:22px;font-size:15px;letter-spacing:-0.65px;color:#0000FF;">private void</div>
<div class="t m" style="left:261.35px;top:325px;height:22px;line-height:22px;font-size:15px;letter-spacing:-0.65px;color:#74531F;">Main_Load</div>
<div class="t m" style="left:336.50px;top:325px;height:22px;line-height:22px;font-size:15px;letter-spacing:-0.65px;color:#000000;">(</div>
<div class="t m" style="left:344.85px;top:325px;height:22px;line-height:22px;font-size:15px;letter-spacing:-0.65px;color:#0000FF;">object</div>
<div class="t m" style="left:403.30px;top:325px;height:22px;line-height:22px;font-size:15px;letter-spacing:-0.65px;color:#000000;">sender, </div>
<div class="t m" style="left:470.10px;top:325px;height:22px;line-height:22px;font-size:15px;letter-spacing:-0.65px;color:#2B91AF;">EventArgs</div>
<div class="t m" style="left:553.60px;top:325px;height:22px;line-height:22px;font-size:15px;letter-spacing:-0.65px;color:#000000;">e)</div>
<div class="t m" style="left:152.80px;top:345px;height:22px;line-height:22px;font-size:15px;letter-spacing:-0.65px;color:#000000;">{</div>
<div class="t m" style="left:186.20px;top:365px;height:22px;line-height:22px;font-size:15px;letter-spacing:-0.65px;color:#008000;">// TODO: </div>
<div class="t" style="left:262.85px;top:362.5px;height:22px;line-height:22px;font-size:16.7px;color:#008000;font-family:'Liberation Mono',monospace;">这</div>
<div class="t" style="left:279.55px;top:362.5px;height:22px;line-height:22px;font-size:16.7px;color:#008000;font-family:'Liberation Mono',monospace;">行</div>
<div class="t" style="left:296.25px;top:362.5px;height:22px;line-height:22px;font-size:16.7px;color:#008000;font-family:'Liberation Mono',monospace;">代</div>
<div class="t" style="left:312.95px;top:362.5px;height:22px;line-height:22px;font-size:16.7px;color:#008000;font-family:'Liberation Mono',monospace;">码</div>
<div class="t" style="left:329.65px;top:362.5px;height:22px;line-height:22px;font-size:16.7px;color:#008000;font-family:'Liberation Mono',monospace;">将</div>
<div class="t" style="left:346.35px;top:362.5px;height:22px;line-height:22px;font-size:16.7px;color:#008000;font-family:'Liberation Mono',monospace;">数</div>
<div class="t" style="left:363.05px;top:362.5px;height:22px;line-height:22px;font-size:16.7px;color:#008000;font-family:'Liberation Mono',monospace;">据</div>
<div class="t" style="left:379.75px;top:362.5px;height:22px;line-height:22px;font-size:16.7px;color:#008000;font-family:'Liberation Mono',monospace;">加</div>
<div class="t" style="left:396.45px;top:362.5px;height:22px;line-height:22px;font-size:16.7px;color:#008000;font-family:'Liberation Mono',monospace;">载</div>
<div class="t" style="left:413.15px;top:362.5px;height:22px;line-height:22px;font-size:16.7px;color:#008000;font-family:'Liberation Mono',monospace;">到</div>
<div class="t" style="left:429.85px;top:362.5px;height:22px;line-height:22px;font-size:16.7px;color:#008000;font-family:'Liberation Mono',monospace;">表</div>
<div class="t" style="left:446.55px;top:362.5px;height:22px;line-height:22px;font-size:16.7px;color:#008000;font-family:'Liberation Mono',monospace;">“</div>
<div class="t m" style="left:461.75px;top:365px;height:22px;line-height:22px;font-size:15px;letter-spacing:-0.65px;color:#008000;">studyEFDataSet1.TestData</div>
<div class="t" style="left:663.65px;top:362.5px;height:22px;line-height:22px;font-size:16.7px;color:#008000;font-family:'Liberation Mono',monospace;">”</div>
<div class="t" style="left:680.35px;top:362.5px;height:22px;line-height:22px;font-size:16.7px;color:#008000;font-family:'Liberation Mono',monospace;">中</div>
<div class="t" style="left:697.05px;top:362.5px;height:22px;line-height:22px;font-size:16.7px;color:#008000;font-family:'Liberation Mono',monospace;">。</div>
<div class="t" style="left:713.75px;top:362.5px;height:22px;line-height:22px;font-size:16.7px;color:#008000;font-family:'Liberation Mono',monospace;">您</div>
<div class="t" style="left:730.45px;top:362.5px;height:22px;line-height:22px;font-size:16.7px;color:#008000;font-family:'Liberation Mono',monospace;">可</div>
<div class="t" style="left:747.15px;top:362.5px;height:22px;line-height:22px;font-size:16.7px;color:#008000;font-family:'Liberation Mono',monospace;">以</div>
<div class="t" style="left:763.85px;top:362.5px;height:22px;line-height:22px;font-size:16.7px;color:#008000;font-family:'Liberation Mono',monospace;">根</div>
<div class="t" style="left:780.55px;top:362.5px;height:22px;line-height:22px;font-size:16.7px;color:#008000;font-family:'Liberation Mono',monospace;">据</div>
<div class="t" style="left:797.25px;top:362.5px;height:22px;line-height:22px;font-size:16.7px;color:#008000;font-family:'Liberation Mono',monospace;">需</div>
<div class="t" style="left:813.95px;top:362.5px;height:22px;line-height:22px;font-size:16.7px;color:#008000;font-family:'Liberation Mono',monospace;">要</div>
<div class="t" style="left:830.65px;top:362.5px;height:22px;line-height:22px;font-size:16.7px;color:#008000;font-family:'Liberation Mono',monospace;">移</div>
<div class="t" style="left:847.35px;top:362.5px;height:22px;line-height:22px;font-size:16.7px;color:#008000;font-family:'Liberation Mono',monospace;">动</div>
<div class="t" style="left:864.05px;top:362.5px;height:22px;line-height:22px;font-size:16.7px;color:#008000;font-family:'Liberation Mono',monospace;">或</div>
<div class="t" style="left:880.75px;top:362.5px;height:22px;line-height:22px;font-size:16.7px;color:#008000;font-family:'Liberation Mono',monospace;">删</div>
<div class="t" style="left:897.45px;top:362.5px;height:22px;line-height:22px;font-size:16.7px;color:#008000;font-family:'Liberation Mono',monospace;">除</div>
<div class="t" style="left:914.15px;top:362.5px;height:22px;line-height:22px;font-size:16.7px;color:#008000;font-family:'Liberation Mono',monospace;">它</div>
<div class="t" style="left:930.85px;top:362.5px;height:22px;line-height:22px;font-size:16.7px;color:#008000;font-family:'Liberation Mono',monospace;">。</div>
<div class="t m" style="left:186.20px;top:385px;height:22px;line-height:22px;font-size:15px;letter-spacing:-0.65px;color:#A3A3EE;">this</div>
<div class="t m" style="left:219.60px;top:385px;height:22px;line-height:22px;font-size:15px;letter-spacing:-0.65px;color:#000000;">.testDataTableAdapter.</div>
<div class="t m" style="left:403.30px;top:385px;height:22px;line-height:22px;font-size:15px;letter-spacing:-0.65px;color:#74531F;">Fill</div>
<div class="t m" style="left:436.70px;top:385px;height:22px;line-height:22px;font-size:15px;letter-spacing:-0.65px;color:#000000;">(</div>
<div class="t m" style="left:445.05px;top:385px;height:22px;line-height:22px;font-size:15px;letter-spacing:-0.65px;color:#A3A3EE;">this</div>
<div class="t m" style="left:478.45px;top:385px;height:22px;line-height:22px;font-size:15px;letter-spacing:-0.65px;color:#000000;">.studyEFDataSet1.TestData);</div>
<div class="t m" style="left:152.80px;top:425px;height:22px;line-height:22px;font-size:15px;letter-spacing:-0.65px;color:#000000;">}</div>
<div class="t m" style="left:152.80px;top:477px;height:22px;line-height:22px;font-size:15px;letter-spacing:-0.65px;color:#0000FF;">private void</div>
<div class="t m" style="left:261.35px;top:477px;height:22px;line-height:22px;font-size:15px;letter-spacing:-0.65px;color:#74531F;">button1_Click</div>
<div class="t m" style="left:369.90px;top:477px;height:22px;line-height:22px;font-size:15px;letter-spacing:-0.65px;color:#000000;">(</div>
<div class="t m" style="left:378.25px;top:477px;height:22px;line-height:22px;font-size:15px;letter-spacing:-0.65px;color:#0000FF;">object</div>
<div class="t m" style="left:436.70px;top:477px;height:22px;line-height:22px;font-size:15px;letter-spacing:-0.65px;color:#000000;">sender, </div>
<div class="t m" style="left:503.50px;top:477px;height:22px;line-height:22px;font-size:15px;letter-spacing:-0.65px;color:#2B91AF;">EventArgs</div>
<div class="t m" style="left:587.00px;top:477px;height:22px;line-height:22px;font-size:15px;letter-spacing:-0.65px;color:#000000;">e)</div>
<div class="t m" style="left:152.80px;top:497px;height:22px;line-height:22px;font-size:15px;letter-spacing:-0.65px;color:#000000;">{</div>
<div class="t m" style="left:186.20px;top:517px;height:22px;line-height:22px;font-size:15px;letter-spacing:-0.65px;color:#2B91AF;">Add</div>
<div class="t m" style="left:219.60px;top:517px;height:22px;line-height:22px;font-size:15px;letter-spacing:-0.65px;color:#000000;">f1 = </div>
<div class="t m" style="left:261.35px;top:517px;height:22px;line-height:22px;font-size:15px;letter-spacing:-0.65px;color:#0000FF;">new</div>
<div class="t m" style="left:294.75px;top:517px;height:22px;line-height:22px;font-size:15px;letter-spacing:-0.65px;color:#2B91AF;">Add</div>
<div class="t m" style="left:319.80px;top:517px;height:22px;line-height:22px;font-size:15px;letter-spacing:-0.65px;color:#000000;">();</div>
<div class="t m" style="left:186.20px;top:537px;height:22px;line-height:22px;font-size:15px;letter-spacing:-0.65px;color:#000000;">f1.Owner = </div>
<div class="t m" style="left:278.05px;top:537px;height:22px;line-height:22px;font-size:15px;letter-spacing:-0.65px;color:#0000FF;">this</div>
<div class="t m" style="left:311.45px;top:537px;height:22px;line-height:22px;font-size:15px;letter-spacing:-0.65px;color:#000000;">;</div>
<div class="t m" style="left:186.20px;top:557px;height:22px;line-height:22px;font-size:15px;letter-spacing:-0.65px;color:#000000;">f1.</div>
<div class="t m" style="left:211.25px;top:557px;height:22px;line-height:22px;font-size:15px;letter-spacing:-0.65px;color:#74531F;">Show</div>
<div class="t m" style="left:244.65px;top:557px;height:22px;line-height:22px;font-size:15px;letter-spacing:-0.65px;color:#000000;">();</div>
<div class="t m" style="left:152.80px;top:577px;height:22px;line-height:22px;font-size:15px;letter-spacing:-0.65px;color:#000000;">}</div>
<div class="t m" style="left:152.80px;top:629px;height:22px;line-height:22px;font-size:15px;letter-spacing:-0.65px;color:#0000FF;">internal void</div>
<div class="t m" style="left:269.70px;top:629px;height:22px;line-height:22px;font-size:15px;letter-spacing:-0.65px;color:#74531F;">Refresh_Method</div>
<div class="t m" style="left:386.60px;top:629px;height:22px;line-height:22px;font-size:15px;letter-spacing:-0.65px;color:#000000;">()</div>
<div class="t m" style="left:152.80px;top:649px;height:22px;line-height:22px;font-size:15px;letter-spacing:-0.65px;color:#000000;">{</div>
<div class="t m" style="left:186.20px;top:669px;height:22px;line-height:22px;font-size:15px;letter-spacing:-0.65px;color:#A3A3EE;">this</div>
<div class="t m" style="left:219.60px;top:669px;height:22px;line-height:22px;font-size:15px;letter-spacing:-0.65px;color:#000000;">.testDataTableAdapter.</div>
<div class="t m" style="left:403.30px;top:669px;height:22px;line-height:22px;font-size:15px;letter-spacing:-0.65px;color:#74531F;">Fill</div>
<div class="t m" style="left:436.70px;top:669px;height:22px;line-height:22px;font-size:15px;letter-spacing:-0.65px;color:#000000;">(</div>
<div class="t m" style="left:445.05px;top:669px;height:22px;line-height:22px;font-size:15px;letter-spacing:-0.65px;color:#A3A3EE;">this</div>
<div class="t m" style="left:478.45px;top:669px;height:22px;line-height:22px;font-size:15px;letter-spacing:-0.65px;color:#000000;">.studyEFDataSet1.TestData);</div>
<div class="t m" style="left:152.80px;top:689px;height:22px;line-height:22px;font-size:15px;letter-spacing:-0.65px;color:#000000;">}</div>
<div class="t m" style="left:119.40px;top:709px;height:22px;line-height:22px;font-size:15px;letter-spacing:-0.65px;color:#000000;">}</div>
<div class="t m" style="left:86.00px;top:729px;height:22px;line-height:22px;font-size:15px;letter-spacing:-0.65px;color:#000000;">}</div>
<div class="t" style="left:119.4px;top:145.5px;height:16px;line-height:16px;font-size:11px;color:#8A8A8A;">5 个引用</div>
<div class="t" style="left:152.8px;top:197.5px;height:16px;line-height:16px;font-size:11px;color:#8A8A8A;">1 个引用</div>
<div class="t" style="left:152.8px;top:309.5px;height:16px;line-height:16px;font-size:11px;color:#8A8A8A;">1 个引用</div>
<div class="t" style="left:152.8px;top:461.5px;height:16px;line-height:16px;font-size:11px;color:#8A8A8A;">1 个引用</div>
<div class="t" style="left:152.8px;top:613.5px;height:16px;line-height:16px;font-size:11px;color:#8A8A8A;">1 个引用</div>
</div>
<div style="position:absolute;left:397px;width:40px;top:177px;height:11px;overflow:hidden;"><div class="t m" style="left:0;width:40px;text-align:right;top:-11px;height:22px;line-height:22px;font-size:15px;letter-spacing:-0.65px;color:#2B91AF;">5</div></div>
<div class="t m" style="left:397px;width:40px;text-align:right;top:186px;height:22px;line-height:22px;font-size:15px;letter-spacing:-0.65px;color:#2B91AF;">6</div>
<div class="t m" style="left:397px;width:40px;text-align:right;top:206px;height:22px;line-height:22px;font-size:15px;letter-spacing:-0.65px;color:#2B91AF;">7</div>
<div class="t m" style="left:397px;width:40px;text-align:right;top:226px;height:22px;line-height:22px;font-size:15px;letter-spacing:-0.65px;color:#2B91AF;">8</div>
<div class="t m" style="left:397px;width:40px;text-align:right;top:246px;height:22px;line-height:22px;font-size:15px;letter-spacing:-0.65px;color:#2B91AF;">9</div>
<div class="t m" style="left:397px;width:40px;text-align:right;top:266px;height:22px;line-height:22px;font-size:15px;letter-spacing:-0.65px;color:#2B91AF;">10</div>
<div class="t m" style="left:397px;width:40px;text-align:right;top:286px;height:22px;line-height:22px;font-size:15px;letter-spacing:-0.65px;color:#2B91AF;">11</div>
<div class="t m" style="left:397px;width:40px;text-align:right;top:306px;height:22px;line-height:22px;font-size:15px;letter-spacing:-0.65px;color:#2B91AF;">12</div>
<div class="t m" style="left:397px;width:40px;text-align:right;top:338px;height:22px;line-height:22px;font-size:15px;letter-spacing:-0.65px;color:#2B91AF;">13</div>
<div class="t m" style="left:397px;width:40px;text-align:right;top:358px;height:22px;line-height:22px;font-size:15px;letter-spacing:-0.65px;color:#2B91AF;">14</div>
<div class="t m" style="left:397px;width:40px;text-align:right;top:390px;height:22px;line-height:22px;font-size:15px;letter-spacing:-0.65px;color:#2B91AF;">15</div>
<div class="t m" style="left:397px;width:40px;text-align:right;top:410px;height:22px;line-height:22px;font-size:15px;letter-spacing:-0.65px;color:#2B91AF;">16</div>
<div class="t m" style="left:397px;width:40px;text-align:right;top:430px;height:22px;line-height:22px;font-size:15px;letter-spacing:-0.65px;color:#2B91AF;">17</div>
<div class="t m" style="left:397px;width:40px;text-align:right;top:450px;height:22px;line-height:22px;font-size:15px;letter-spacing:-0.65px;color:#2B91AF;">18</div>
<div class="t m" style="left:397px;width:40px;text-align:right;top:470px;height:22px;line-height:22px;font-size:15px;letter-spacing:-0.65px;color:#2B91AF;">19</div>
<div class="t m" style="left:397px;width:40px;text-align:right;top:502px;height:22px;line-height:22px;font-size:15px;letter-spacing:-0.65px;color:#2B91AF;">20</div>
<div class="t m" style="left:397px;width:40px;text-align:right;top:522px;height:22px;line-height:22px;font-size:15px;letter-spacing:-0.65px;color:#2B91AF;">21</div>
<div class="t m" style="left:397px;width:40px;text-align:right;top:542px;height:22px;line-height:22px;font-size:15px;letter-spacing:-0.65px;color:#2B91AF;">22</div>
<div class="t m" style="left:397px;width:40px;text-align:right;top:562px;height:22px;line-height:22px;font-size:15px;letter-spacing:-0.65px;color:#2B91AF;">23</div>
<div class="t m" style="left:397px;width:40px;text-align:right;top:582px;height:22px;line-height:22px;font-size:15px;letter-spacing:-0.65px;color:#2B91AF;">24</div>
<div class="t m" style="left:397px;width:40px;text-align:right;top:602px;height:22px;line-height:22px;font-size:15px;letter-spacing:-0.65px;color:#2B91AF;">25</div>
<div class="t m" style="left:397px;width:40px;text-align:right;top:622px;height:22px;line-height:22px;font-size:15px;letter-spacing:-0.65px;color:#2B91AF;">26</div>
<div class="t m" style="left:397px;width:40px;text-align:right;top:654px;height:22px;line-height:22px;font-size:15px;letter-spacing:-0.65px;color:#2B91AF;">27</div>
<div class="t m" style="left:397px;width:40px;text-align:right;top:674px;height:22px;line-height:22px;font-size:15px;letter-spacing:-0.65px;color:#2B91AF;">28</div>
<div class="t m" style="left:397px;width:40px;text-align:right;top:694px;height:22px;line-height:22px;font-size:15px;letter-spacing:-0.65px;color:#2B91AF;">29</div>
<div class="t m" style="left:397px;width:40px;text-align:right;top:714px;height:22px;line-height:22px;font-size:15px;letter-spacing:-0.65px;color:#2B91AF;">30</div>
<div class="t m" style="left:397px;width:40px;text-align:right;top:734px;height:22px;line-height:22px;font-size:15px;letter-spacing:-0.65px;color:#2B91AF;">31</div>
<div class="t m" style="left:397px;width:40px;text-align:right;top:754px;height:22px;line-height:22px;font-size:15px;letter-spacing:-0.65px;color:#2B91AF;">32</div>
<div class="t m" style="left:397px;width:40px;text-align:right;top:774px;height:22px;line-height:22px;font-size:15px;letter-spacing:-0.65px;color:#2B91AF;">33</div>
<div class="t m" style="left:397px;width:40px;text-align:right;top:806px;height:22px;line-height:22px;font-size:15px;letter-spacing:-0.65px;color:#2B91AF;">34</div>
<div class="t m" style="left:397px;width:40px;text-align:right;top:826px;height:22px;line-height:22px;font-size:15px;letter-spacing:-0.65px;color:#2B91AF;">35</div>
<div class="t m" style="left:397px;width:40px;text-align:right;top:846px;height:22px;line-height:22px;font-size:15px;letter-spacing:-0.65px;color:#2B91AF;">36</div>
<div class="t m" style="left:397px;width:40px;text-align:right;top:866px;height:22px;line-height:22px;font-size:15px;letter-spacing:-0.65px;color:#2B91AF;">37</div>
<div class="t m" style="left:397px;width:40px;text-align:right;top:886px;height:22px;line-height:22px;font-size:15px;letter-spacing:-0.65px;color:#2B91AF;">38</div>
<div class="t m" style="left:397px;width:40px;text-align:right;top:906px;height:22px;line-height:22px;font-size:15px;letter-spacing:-0.65px;color:#2B91AF;">39</div>
<div class="t m" style="left:397px;width:40px;text-align:right;top:926px;height:22px;line-height:22px;font-size:15px;letter-spacing:-0.65px;color:#2B91AF;">40</div>
<div style="position:absolute;left:463px;top:177px;width:1px;height:87px;background:#A5A5A5;"></div>
<div style="position:absolute;left:463px;top:264px;width:5px;height:1px;background:#A5A5A5;"></div>
<div style="position:absolute;left:459px;top:291px;width:9px;height:9px;box-sizing:border-box;border:1px solid #A5A5A5;background:#fff;"></div>
<div style="position:absolute;left:461px;top:295px;width:5px;height:1px;background:#7A7A7A;"></div>
<div style="position:absolute;left:463px;top:301px;width:1px;height:624px;background:#A5A5A5;"></div>
<div style="position:absolute;left:463px;top:924px;width:5px;height:1px;background:#A5A5A5;"></div>
<div style="position:absolute;left:459px;top:343px;width:9px;height:9px;box-sizing:border-box;border:1px solid #A5A5A5;background:#fff;"></div>
<div style="position:absolute;left:461px;top:347px;width:5px;height:1px;background:#7A7A7A;"></div>
<div style="position:absolute;left:459px;top:395px;width:9px;height:9px;box-sizing:border-box;border:1px solid #A5A5A5;background:#fff;"></div>
<div style="position:absolute;left:461px;top:399px;width:5px;height:1px;background:#7A7A7A;"></div>
<div style="position:absolute;left:459px;top:507px;width:9px;height:9px;box-sizing:border-box;border:1px solid #A5A5A5;background:#fff;"></div>
<div style="position:absolute;left:461px;top:511px;width:5px;height:1px;background:#7A7A7A;"></div>
<div style="position:absolute;left:459px;top:659px;width:9px;height:9px;box-sizing:border-box;border:1px solid #A5A5A5;background:#fff;"></div>
<div style="position:absolute;left:461px;top:663px;width:5px;height:1px;background:#7A7A7A;"></div>
<div style="position:absolute;left:459px;top:811px;width:9px;height:9px;box-sizing:border-box;border:1px solid #A5A5A5;background:#fff;"></div>
<div style="position:absolute;left:461px;top:815px;width:5px;height:1px;background:#7A7A7A;"></div>
<div style="position:absolute;left:463px;top:468px;width:5px;height:1px;background:#A5A5A5;"></div>
<div style="position:absolute;left:463px;top:620px;width:5px;height:1px;background:#A5A5A5;"></div>
<div style="position:absolute;left:463px;top:772px;width:5px;height:1px;background:#A5A5A5;"></div>
<div style="position:absolute;left:463px;top:884px;width:5px;height:1px;background:#A5A5A5;"></div>
<div style="position:absolute;left:463px;top:904px;width:5px;height:1px;background:#A5A5A5;"></div>
<div style="position:absolute;left:471px;top:324px;width:0;height:582px;border-left:1px dotted #C4C4C4;"></div>
<div style="position:absolute;left:505px;top:376px;width:0;height:92px;border-left:1px dotted #C4C4C4;"></div>
<div style="position:absolute;left:505px;top:428px;width:0;height:456px;border-left:1px dotted #C4C4C4;"></div>
<div style="position:absolute;left:538px;top:428px;width:0;height:22px;border-left:1px dotted #C4C4C4;"></div>
<div style="position:absolute;left:538px;top:540px;width:0;height:60px;border-left:1px dotted #C4C4C4;"></div>
<div style="position:absolute;left:538px;top:692px;width:0;height:62px;border-left:1px dotted #C4C4C4;"></div>
<div style="position:absolute;left:538px;top:845px;width:0;height:21px;border-left:1px dotted #C4C4C4;"></div>
<div style="position:absolute;left:505px;top:524px;width:0;height:96px;border-left:1px dotted #C4C4C4;"></div>
<div style="position:absolute;left:505px;top:676px;width:0;height:96px;border-left:1px dotted #C4C4C4;"></div>
<div style="position:absolute;left:505px;top:828px;width:0;height:56px;border-left:1px dotted #C4C4C4;"></div>
<div style="position:absolute;left:453px;top:693px;width:5px;height:60px;background:#66D966;"></div>
<div style="position:absolute;left:453px;top:774px;width:5px;height:130px;background:#66D966;"></div>
<div style="position:absolute;left:543px;top:674px;width:1px;height:19px;background:#000;"></div>
<div style="position:absolute;left:644px;top:672px;width:16px;height:0;border-top:1px dotted #808080;"></div>
<div style="position:absolute;left:644px;top:712px;width:16px;height:0;border-top:1px dotted #808080;"></div>
<div style="position:absolute;left:1735px;top:177px;width:28px;height:932px;background:#E8E8EC;"></div>
<svg style="position:absolute;left:1742px;top:185px;" width="14" height="8" viewBox="0 0 14 8"><path d="M0 8 L7 0 L14 8 Z" fill="#868999"/></svg>
<div style="position:absolute;left:1741px;top:246px;width:16px;height:439px;background:#C2C3C9;"></div>
<div style="position:absolute;left:1737px;top:482px;width:6px;height:35px;background:#66D966;"></div>
<div style="position:absolute;left:1737px;top:523px;width:6px;height:67px;background:#66D966;"></div>
<div style="position:absolute;left:1735px;top:478px;width:28px;height:3px;background:#0000CD;"></div>
<div style="position:absolute;left:1755px;top:468px;width:7px;height:9px;background:#A6A6AD;"></div>
<div style="position:absolute;left:1755px;top:486px;width:7px;height:9px;background:#A6A6AD;"></div>
<svg style="position:absolute;left:1742px;top:1092px;" width="14" height="8" viewBox="0 0 14 8"><path d="M0 0 L14 0 L7 8 Z" fill="#868999"/></svg>
<div style="position:absolute;left:381px;top:1109px;width:1382px;height:26px;background:#E8E8EE;"></div>
<div style="position:absolute;left:381px;top:1109px;width:90px;height:26px;background:#FCFCFC;box-sizing:border-box;border:1px solid #D0D3DE;"></div>
<div class="t" style="left:384px;top:1109.0px;height:27px;line-height:27px;font-size:19px;color:#1e1e1e;">53 %</div>
<svg style="position:absolute;left:458px;top:1121px;" width="9" height="5" viewBox="0 0 9 5"><path d="M0 0 H9 L4.5 5 Z" fill="#1e1e1e"/></svg>
<svg style="position:absolute;left:506px;top:1113px;" width="18" height="18" viewBox="0 0 18 18"><circle cx="9" cy="9" r="9" fill="#1F9E3A"/><path d="M4.5 9.5 L7.8 12.5 L13.5 5.8" stroke="#fff" stroke-width="2.2" fill="none"/></svg>
<div class="t" style="left:531px;top:1109.5px;height:26px;line-height:26px;font-size:18px;color:#1e1e1e;">未找到相关问题</div>
<div style="position:absolute;left:747px;top:1113px;width:2px;height:18px;background:#B9BAC4;"></div>
<svg style="position:absolute;left:768px;top:1110px;" width="22" height="22" viewBox="0 0 22 22"><path d="M3.2 11.2 L11.9 19.9 L16 15.8 L7.3 7.1 Z" fill="none" stroke="#555" stroke-width="1.5"/><path d="M8.6 5.4 L17.4 14.2 A6.2 6.2 0 0 0 8.6 5.4 Z" fill="#444"/><path d="M14.5 6.5 L19.8 1.3" stroke="#444" stroke-width="1.6"/></svg>
<svg style="position:absolute;left:796px;top:1119px;" width="10" height="6" viewBox="0 0 10 6"><path d="M0 0 H10 L5 6 Z" fill="#1e1e1e"/></svg>
<svg style="position:absolute;left:851px;top:1116px;" width="8" height="13" viewBox="0 0 8 13"><path d="M8 0 V13 L0 6.5 Z" fill="#C8C9D0"/></svg>
<svg style="position:absolute;left:1430px;top:1116px;" width="8" height="13" viewBox="0 0 8 13"><path d="M0 0 V13 L8 6.5 Z" fill="#C8C9D0"/></svg>
<div class="t" style="left:1480px;top:1109.0px;height:27px;line-height:27px;font-size:19px;color:#1e1e1e;">行: 28</div>
<div class="t" style="left:1553px;top:1109.0px;height:27px;line-height:27px;font-size:19px;color:#1e1e1e;">字符: 10</div>
<div class="t" style="left:1644px;top:1109.5px;height:26px;line-height:26px;font-size:18px;color:#1e1e1e;">空格</div>
<div class="t" style="left:1708px;top:1109.0px;height:27px;line-height:27px;font-size:19px;color:#1e1e1e;">CRLF</div>
<div style="position:absolute;left:381px;top:1148px;width:1382px;height:33px;background:#40568D;"></div>
<div class="t" style="left:387px;top:1151.5px;height:26px;line-height:26px;font-size:18px;color:#FFFFFF;">输出</div>
<svg style="position:absolute;left:1687px;top:1160px;" width="12" height="7" viewBox="0 0 12 7"><path d="M0 0 H12 L6 6.5 Z" fill="#9EA9D6"/></svg>
<svg style="position:absolute;left:1713px;top:1155px;" width="11" height="18" viewBox="0 0 11 18"><path d="M2.5 1 H8.5 V9 H10 V10.5 H1 V9 H2.5 Z M4 2.5 V9 H5.5 V2.5 Z" fill="#B3BEE2" fill-rule="evenodd"/><rect x="4.8" y="10" width="1.5" height="7" fill="#B3BEE2"/></svg>
<svg style="position:absolute;left:1738px;top:1157px;" width="15" height="15" viewBox="0 0 15 15"><path d="M1 1 L14 14 M14 1 L1 14" stroke="#B3BEE2" stroke-width="1.7"/></svg>
<div style="position:absolute;left:381px;top:1181px;width:1382px;height:40px;background:#CCD5F0;"></div>
<div class="t" style="left:391px;top:1189.0px;height:26px;line-height:26px;font-size:18px;color:#1e1e1e;">显示输出来源(<u>S</u>):</div>
<div style="position:absolute;left:535px;top:1187px;width:449px;height:30px;background:#F0F3FC;box-sizing:border-box;border:1px solid #E1E6F6;"></div>
<div class="t" style="left:541px;top:1189.0px;height:26px;line-height:26px;font-size:18px;color:#1e1e1e;">调试</div>
<svg style="position:absolute;left:969px;top:1199px;" width="9" height="5" viewBox="0 0 9 5"><path d="M0 0 H9 L4.5 5 Z" fill="#1e1e1e"/></svg>
<div style="position:absolute;left:993px;top:1187px;width:2px;height:27px;background:#9AA6CE;"></div>
<div style="position:absolute;left:1040px;top:1187px;width:2px;height:27px;background:#9AA6CE;"></div>
<div style="position:absolute;left:1121px;top:1187px;width:2px;height:27px;background:#9AA6CE;"></div>
<div style="position:absolute;left:1168px;top:1187px;width:2px;height:27px;background:#9AA6CE;"></div>
<svg style="position:absolute;left:1008px;top:1190px;" width="24" height="22" viewBox="0 0 24 22"><path d="M10 3 C6 3 5 6 6 9 M3 6 L6 9.5 L9 6" stroke="#A9AFC6" stroke-width="1.7" fill="none"/><path d="M10 12 H22 M4 16 H22 M4 20 H22" stroke="#A9AFC6" stroke-width="2"/></svg>
<svg style="position:absolute;left:1054px;top:1190px;" width="24" height="22" viewBox="0 0 24 22"><path d="M3 7 H12 M6 3 L2.5 7 L6 11" stroke="#A9AFC6" stroke-width="1.8" fill="none"/><path d="M12 11 H22 M4 15 H22 M4 19 H22" stroke="#A9AFC6" stroke-width="2"/></svg>
<svg style="position:absolute;left:1089px;top:1190px;" width="24" height="22" viewBox="0 0 24 22"><path d="M2 7 H11 M8 3 L11.5 7 L8 11" stroke="#A9AFC6" stroke-width="1.8" fill="none"/><path d="M12 11 H22 M4 15 H22 M4 19 H22" stroke="#A9AFC6" stroke-width="2"/></svg>
<svg style="position:absolute;left:1134px;top:1189px;" width="24" height="24" viewBox="0 0 24 24"><path d="M2 2 L8 8 M8 2 L2 8" stroke="#C42B1C" stroke-width="2.2"/><path d="M11 4 H21 M11 9 H21 M3 14 H21 M3 20 H21" stroke="#333" stroke-width="2.4"/></svg>
<svg style="position:absolute;left:1181px;top:1189px;" width="26" height="24" viewBox="0 0 26 24"><text x="1" y="10" font-family="Liberation Sans" font-size="11" fill="#333">ab</text><text x="1" y="21" font-family="Liberation Sans" font-size="11" fill="#333">c</text><path d="M22 9 V17 H12 M15 13 L11 17 L15 21" stroke="#333" stroke-width="2.4" fill="none"/></svg>
<div style="position:absolute;left:381px;top:1221px;width:1382px;height:70px;background:#E7E8EC;"></div>
<div class="t" style="left:399.00px;top:1222.5px;height:24px;line-height:24px;font-size:17.8px;color:#1e1e1e;">程</div>
<div class="t" style="left:416.90px;top:1222.5px;height:24px;line-height:24px;font-size:17.8px;color:#1e1e1e;">序</div>
<div class="t" style="left:434.80px;top:1222.5px;height:24px;line-height:24px;font-size:17.8px;color:#1e1e1e;">“</div>
<div class="t m" style="left:452.70px;top:1222.5px;height:24px;line-height:24px;font-size:16px;letter-spacing:-0.65px;color:#1e1e1e;">[28124] StudyEF.exe</div>
<div class="t" style="left:622.75px;top:1222.5px;height:24px;line-height:24px;font-size:17.8px;color:#1e1e1e;">”</div>
<div class="t" style="left:640.65px;top:1222.5px;height:24px;line-height:24px;font-size:17.8px;color:#1e1e1e;">已</div>
<div class="t" style="left:658.55px;top:1222.5px;height:24px;line-height:24px;font-size:17.8px;color:#1e1e1e;">退</div>
<div class="t" style="left:676.45px;top:1222.5px;height:24px;line-height:24px;font-size:17.8px;color:#1e1e1e;">出</div>
<div class="t" style="left:694.35px;top:1222.5px;height:24px;line-height:24px;font-size:17.8px;color:#1e1e1e;">，</div>
<div class="t" style="left:712.25px;top:1222.5px;height:24px;line-height:24px;font-size:17.8px;color:#1e1e1e;">返</div>
<div class="t" style="left:730.15px;top:1222.5px;height:24px;line-height:24px;font-size:17.8px;color:#1e1e1e;">回</div>
<div class="t" style="left:748.05px;top:1222.5px;height:24px;line-height:24px;font-size:17.8px;color:#1e1e1e;">值</div>
<div class="t" style="left:765.95px;top:1222.5px;height:24px;line-height:24px;font-size:17.8px;color:#1e1e1e;">为</div>
<div class="t m" style="left:792.80px;top:1222.5px;height:24px;line-height:24px;font-size:16px;letter-spacing:-0.65px;color:#1e1e1e;">-1 (0xffffffff)</div>
<div class="t" style="left:927.05px;top:1222.5px;height:24px;line-height:24px;font-size:17.8px;color:#1e1e1e;">。</div>
<svg style="position:absolute;left:1742px;top:1230px;" width="14" height="8" viewBox="0 0 14 8"><path d="M0 8 L7 0 L14 8 Z" fill="#868999"/></svg>
<div style="position:absolute;left:1734px;top:1242px;width:29px;height:3px;background:#0000CD;"></div>
<svg style="position:absolute;left:1742px;top:1254px;" width="14" height="8" viewBox="0 0 14 8"><path d="M0 0 L14 0 L7 8 Z" fill="#868999"/></svg>
<div style="position:absolute;left:381px;top:1269px;width:1354px;height:22px;background:#E8E8EC;"></div>
<svg style="position:absolute;left:390px;top:1274px;" width="8" height="13" viewBox="0 0 8 13"><path d="M8 0 V13 L0 6.5 Z" fill="#868999"/></svg>
<div style="position:absolute;left:407px;top:1275px;width:616px;height:10px;background:#C2C3C9;"></div>
<svg style="position:absolute;left:1717px;top:1273px;" width="8" height="14" viewBox="0 0 8 14"><path d="M0 0 V14 L8 7 Z" fill="#868999"/></svg>
<div style="position:absolute;left:381px;top:1293px;width:87px;height:27px;background:#40568D;"></div>
<div class="t" style="left:389px;top:1294.5px;height:26px;line-height:26px;font-size:18px;color:#FFFFFF;">错误列表</div>
<div style="position:absolute;left:472px;top:1291px;width:51px;height:30px;background:#F7F8FD;"></div>
<div class="t" style="left:480px;top:1294.5px;height:26px;line-height:26px;font-size:18px;color:#1e1e1e;">输出</div>
<div style="position:absolute;left:2085px;top:511px;width:425px;height:26px;background:#E6E7EF;"></div>
<div style="position:absolute;left:2085px;top:222px;width:425px;height:1073px;overflow:hidden;">
<svg style="position:absolute;left:22px;top:7px" width="24" height="23"><rect x="5" y="1" width="18" height="17" fill="none" stroke="#333" stroke-width="1.6"/><rect x="5" y="1" width="18" height="3" fill="#333"/><rect x="0" y="9" width="13" height="14" fill="#F7F8FD"/><path transform="translate(-1.30 8.58) scale(0.383)" d="M27.9 5 L35.8 9 L35.8 30.5 L27.9 34.7 L16.5 23 L9.5 28.7 L6 26.8 L6 13 L9.5 11 L16.5 16.8 Z M29 14 L21 20 L29 26 Z M9.7 16 L9.7 24 L13 20 Z" fill="#8A4FCF" fill-rule="evenodd"/></svg>
<div class="t" style="left:52px;top:5px;height:26px;line-height:26px;font-size:19px;color:#1e1e1e;font-weight:normal;">解决方案“Desktop Application Net”(3 个项目</div>
<svg style="position:absolute;left:16px;top:36px" width="9" height="16"><path d="M1 1 L8 8 L1 15 Z" fill="none" stroke="#1e1e1e" stroke-width="1.6"/></svg>
<svg style="position:absolute;left:49px;top:33px" width="24" height="23"><rect x="1" y="1" width="20" height="19" fill="#E2E3EE" stroke="#388A34" stroke-width="2"/><text x="11" y="15" text-anchor="middle" font-family="Liberation Sans" font-weight="bold" font-size="10.5" fill="#333">C#</text></svg>
<div class="t" style="left:80px;top:31px;height:26px;line-height:26px;font-size:19px;color:#1e1e1e;font-weight:normal;">Desktop Application Net</div>
<svg style="position:absolute;left:16px;top:62px" width="9" height="16"><path d="M1 1 L8 8 L1 15 Z" fill="none" stroke="#1e1e1e" stroke-width="1.6"/></svg>
<svg style="position:absolute;left:49px;top:59px" width="24" height="23"><rect x="1" y="1" width="20" height="19" fill="#E2E3EE" stroke="#388A34" stroke-width="2"/><text x="11" y="15" text-anchor="middle" font-family="Liberation Sans" font-weight="bold" font-size="10.5" fill="#333">C#</text></svg>
<div class="t" style="left:80px;top:57px;height:26px;line-height:26px;font-size:19px;color:#1e1e1e;font-weight:normal;">SchoolPC</div>
<svg style="position:absolute;left:16px;top:91px" width="11" height="11"><path d="M10 0 V10 H0 Z" fill="#1e1e1e"/></svg>
<svg style="position:absolute;left:49px;top:85px" width="24" height="23"><rect x="1" y="1" width="20" height="19" fill="#E2E3EE" stroke="#388A34" stroke-width="2"/><text x="11" y="15" text-anchor="middle" font-family="Liberation Sans" font-weight="bold" font-size="10.5" fill="#333">C#</text></svg>
<div class="t" style="left:80px;top:83px;height:26px;line-height:26px;font-size:19px;color:#1e1e1e;font-weight:bold;">StudyEF</div>
<svg style="position:absolute;left:43px;top:114px" width="9" height="16"><path d="M1 1 L8 8 L1 15 Z" fill="none" stroke="#1e1e1e" stroke-width="1.6"/></svg>
<svg style="position:absolute;left:76px;top:111px" width="24" height="23"><path d="M2 21 L10 13" stroke="#333" stroke-width="3.6" stroke-linecap="round"/><path d="M9 13 C6 9 8 2 15 2 L12 6 L14 9 L19 6 C20 13 13 16 10 14 Z" fill="#333"/></svg>
<div class="t" style="left:107px;top:109px;height:26px;line-height:26px;font-size:19px;color:#1e1e1e;font-weight:normal;">Properties</div>
<svg style="position:absolute;left:43px;top:140px" width="9" height="16"><path d="M1 1 L8 8 L1 15 Z" fill="none" stroke="#1e1e1e" stroke-width="1.6"/></svg>
<svg style="position:absolute;left:76px;top:137px" width="24" height="23"><rect x="0" y="12" width="5" height="5" fill="#333"/><rect x="5.5" y="5" width="3.5" height="3.7" fill="#333"/><rect x="11" y="10" width="6" height="8" fill="#333"/><rect x="15.5" y="3" width="6" height="6.5" fill="#333"/><path d="M5 14.5 H11 M9 7 H15.5" stroke="#333" stroke-width="1" stroke-dasharray="1.5 1"/></svg>
<div class="t" style="left:107px;top:135px;height:26px;line-height:26px;font-size:19px;color:#1e1e1e;font-weight:normal;">引用</div>
<svg style="position:absolute;left:43px;top:169px" width="11" height="11"><path d="M10 0 V10 H0 Z" fill="#1e1e1e"/></svg>
<svg style="position:absolute;left:76px;top:163px" width="24" height="23"><rect x="1" y="2" width="20" height="17" fill="#E8EAF4" stroke="#333" stroke-width="1.8"/><rect x="1" y="2" width="20" height="3" fill="#333"/><path d="M4 10 H8 M11 10 H18 M4 14 H8 M11 14 H18" stroke="#333" stroke-width="2"/></svg>
<div class="t" style="left:107px;top:161px;height:26px;line-height:26px;font-size:19px;color:#1e1e1e;font-weight:normal;">Add.cs</div>
<svg style="position:absolute;left:70px;top:192px" width="9" height="16"><path d="M1 1 L8 8 L1 15 Z" fill="none" stroke="#1e1e1e" stroke-width="1.6"/></svg>
<svg style="position:absolute;left:103px;top:189px" width="24" height="23"><path d="M4 5 V21 H17 V8 L13 4 H9" fill="#E8EAF4" stroke="#333" stroke-width="1.7"/><path d="M13 4 V8 H17" fill="none" stroke="#333" stroke-width="1.4"/><path d="M0 4 H8 M5 1 L8.5 4 L5 7" stroke="#1C5CA8" stroke-width="1.9" fill="none"/></svg>
<div class="t" style="left:134px;top:187px;height:26px;line-height:26px;font-size:19px;color:#1e1e1e;font-weight:normal;">Add.Designer.cs</div>
<svg style="position:absolute;left:103px;top:215px" width="24" height="23"><path d="M4 5 V21 H17 V8 L13 4 H9" fill="#E8EAF4" stroke="#333" stroke-width="1.7"/><path d="M13 4 V8 H17" fill="none" stroke="#333" stroke-width="1.4"/><path d="M0 4 H8 M5 1 L8.5 4 L5 7" stroke="#1C5CA8" stroke-width="1.9" fill="none"/></svg>
<div class="t" style="left:134px;top:213px;height:26px;line-height:26px;font-size:19px;color:#1e1e1e;font-weight:normal;">Add.resx</div>
<svg style="position:absolute;left:76px;top:241px" width="24" height="23"><path d="M6.5 1.5 H14.5 L19 6 V20.5 H6.5 Z" fill="#E8EAF4" stroke="#333" stroke-width="1.6"/><path d="M14.5 1.5 V6 H19 Z" fill="#333" stroke="#333" stroke-width="1"/><path d="M0.5 7.5 H3 V10.5 H6.5 V7.5 H9 V12 A4 4 0 0 1 6.5 15.5 V22 H3.5 V15.5 A4 4 0 0 1 0.5 12 Z" fill="#333" stroke="#F7F8FD" stroke-width="1.2" paint-order="stroke"/></svg>
<div class="t" style="left:107px;top:239px;height:26px;line-height:26px;font-size:19px;color:#1e1e1e;font-weight:normal;">App.config</div>
<svg style="position:absolute;left:43px;top:270px" width="9" height="16"><path d="M1 1 L8 8 L1 15 Z" fill="none" stroke="#1e1e1e" stroke-width="1.6"/></svg>
<svg style="position:absolute;left:76px;top:267px" width="24" height="23"><path d="M10 3.5 V13.5 A5.8 2.6 0 0 0 21.6 13.5 V3.5 Z" fill="#3a3a3a"/><ellipse cx="15.8" cy="3.5" rx="5.8" ry="2.6" fill="#3a3a3a"/><ellipse cx="15.8" cy="3.6" rx="4.3" ry="1.5" fill="#E8EAF4"/><path d="M1 14 H8 M4 11 L1 14 L4 17 M6 20 H13 M10 17 L13 20 L10 23 M7 14 L7 20" stroke="#333" stroke-width="1.8" fill="none"/></svg>
<div class="t" style="left:107px;top:265px;height:26px;line-height:26px;font-size:19px;color:#1e1e1e;font-weight:normal;">EFData.edmx</div>
<svg style="position:absolute;left:43px;top:296px" width="9" height="16"><path d="M1 1 L8 8 L1 15 Z" fill="none" stroke="#1e1e1e" stroke-width="1.6"/></svg>
<svg style="position:absolute;left:76px;top:293px" width="24" height="23"><rect x="1" y="2" width="20" height="17" fill="#E8EAF4" stroke="#333" stroke-width="1.8"/><rect x="1" y="2" width="20" height="3" fill="#333"/><path d="M4 10 H8 M11 10 H18 M4 14 H8 M11 14 H18" stroke="#333" stroke-width="2"/></svg>
<div class="t" style="left:107px;top:291px;height:26px;line-height:26px;font-size:19px;color:#1e1e1e;font-weight:normal;">Main.cs</div>
<svg style="position:absolute;left:76px;top:319px" width="24" height="23"><path d="M6.5 1.5 H14.5 L19 6 V20.5 H6.5 Z" fill="#E8EAF4" stroke="#333" stroke-width="1.6"/><path d="M14.5 1.5 V6 H19 Z" fill="#333" stroke="#333" stroke-width="1"/><path d="M0.5 7.5 H3 V10.5 H6.5 V7.5 H9 V12 A4 4 0 0 1 6.5 15.5 V22 H3.5 V15.5 A4 4 0 0 1 0.5 12 Z" fill="#333" stroke="#F7F8FD" stroke-width="1.2" paint-order="stroke"/></svg>
<div class="t" style="left:107px;top:317px;height:26px;line-height:26px;font-size:19px;color:#1e1e1e;font-weight:normal;">packages.config</div>
<svg style="position:absolute;left:43px;top:348px" width="9" height="16"><path d="M1 1 L8 8 L1 15 Z" fill="none" stroke="#1e1e1e" stroke-width="1.6"/></svg>
<svg style="position:absolute;left:76px;top:345px" width="24" height="23"><text x="11" y="16" text-anchor="middle" font-family="Liberation Sans" font-weight="bold" font-size="13" fill="#388A34">C#</text></svg>
<div class="t" style="left:107px;top:343px;height:26px;line-height:26px;font-size:19px;color:#1e1e1e;font-weight:normal;">Program.cs</div>
<svg style="position:absolute;left:43px;top:374px" width="9" height="16"><path d="M1 1 L8 8 L1 15 Z" fill="none" stroke="#1e1e1e" stroke-width="1.6"/></svg>
<svg style="position:absolute;left:76px;top:371px" width="24" height="23"><ellipse cx="15" cy="4" rx="5" ry="2.5" fill="#333"/><rect x="10" y="4" width="10" height="9" fill="#333"/><ellipse cx="15" cy="13" rx="5" ry="2.5" fill="#333"/><ellipse cx="6.5" cy="10" rx="5.5" ry="2.5" fill="#333" stroke="#F7F8FD" stroke-width="1.2"/><rect x="1" y="10" width="11" height="9" fill="#333"/><ellipse cx="6.5" cy="19" rx="5.5" ry="2.5" fill="#333"/><ellipse cx="6.5" cy="10" rx="4.5" ry="1.5" fill="#999"/><ellipse cx="15" cy="4" rx="4" ry="1.4" fill="#999"/></svg>
<div class="t" style="left:107px;top:369px;height:26px;line-height:26px;font-size:19px;color:#1e1e1e;font-weight:normal;">StudyEFDataSet.xsd</div>
<svg style="position:absolute;left:43px;top:403px" width="11" height="11"><path d="M10 0 V10 H0 Z" fill="#1e1e1e"/></svg>
<svg style="position:absolute;left:76px;top:397px" width="24" height="23"><ellipse cx="15" cy="4" rx="5" ry="2.5" fill="#333"/><rect x="10" y="4" width="10" height="9" fill="#333"/><ellipse cx="15" cy="13" rx="5" ry="2.5" fill="#333"/><ellipse cx="6.5" cy="10" rx="5.5" ry="2.5" fill="#333" stroke="#F7F8FD" stroke-width="1.2"/><rect x="1" y="10" width="11" height="9" fill="#333"/><ellipse cx="6.5" cy="19" rx="5.5" ry="2.5" fill="#333"/><ellipse cx="6.5" cy="10" rx="4.5" ry="1.5" fill="#999"/><ellipse cx="15" cy="4" rx="4" ry="1.4" fill="#999"/></svg>
<div class="t" style="left:107px;top:395px;height:26px;line-height:26px;font-size:19px;color:#1e1e1e;font-weight:normal;">StudyEFDataSet1.xsd</div>
<svg style="position:absolute;left:70px;top:426px" width="9" height="16"><path d="M1 1 L8 8 L1 15 Z" fill="none" stroke="#1e1e1e" stroke-width="1.6"/></svg>
<svg style="position:absolute;left:103px;top:423px" width="24" height="23"><path d="M4 5 V21 H17 V8 L13 4 H9" fill="#E8EAF4" stroke="#333" stroke-width="1.7"/><path d="M13 4 V8 H17" fill="none" stroke="#333" stroke-width="1.4"/><path d="M0 4 H8 M5 1 L8.5 4 L5 7" stroke="#1C5CA8" stroke-width="1.9" fill="none"/></svg>
<div class="t" style="left:134px;top:421px;height:26px;line-height:26px;font-size:19px;color:#1e1e1e;font-weight:normal;">StudyEFDataSet1.Designer.cs</div>
<svg style="position:absolute;left:103px;top:449px" width="24" height="23"><path d="M4 5 V21 H17 V8 L13 4 H9" fill="#E8EAF4" stroke="#333" stroke-width="1.7"/><path d="M13 4 V8 H17" fill="none" stroke="#333" stroke-width="1.4"/><path d="M0 4 H8 M5 1 L8.5 4 L5 7" stroke="#1C5CA8" stroke-width="1.9" fill="none"/></svg>
<div class="t" style="left:134px;top:447px;height:26px;line-height:26px;font-size:19px;color:#1e1e1e;font-weight:normal;">StudyEFDataSet1.xsc</div>
<svg style="position:absolute;left:103px;top:475px" width="24" height="23"><path d="M4 5 V21 H17 V8 L13 4 H9" fill="#E8EAF4" stroke="#333" stroke-width="1.7"/><path d="M13 4 V8 H17" fill="none" stroke="#333" stroke-width="1.4"/><path d="M0 4 H8 M5 1 L8.5 4 L5 7" stroke="#1C5CA8" stroke-width="1.9" fill="none"/></svg>
<div class="t" style="left:134px;top:473px;height:26px;line-height:26px;font-size:19px;color:#1e1e1e;font-weight:normal;">StudyEFDataSet1.xss</div>
<svg style="position:absolute;left:43px;top:504px" width="9" height="16"><path d="M1 1 L8 8 L1 15 Z" fill="none" stroke="#1e1e1e" stroke-width="1.6"/></svg>
<svg style="position:absolute;left:76px;top:501px" width="24" height="23"><rect x="1" y="2" width="20" height="17" fill="#E8EAF4" stroke="#333" stroke-width="1.8"/><rect x="1" y="2" width="20" height="3" fill="#333"/><path d="M4 10 H8 M11 10 H18 M4 14 H8 M11 14 H18" stroke="#333" stroke-width="2"/></svg>
<div class="t" style="left:107px;top:499px;height:26px;line-height:26px;font-size:19px;color:#1e1e1e;font-weight:normal;">Update.cs</div>
</div>
</body></html>
